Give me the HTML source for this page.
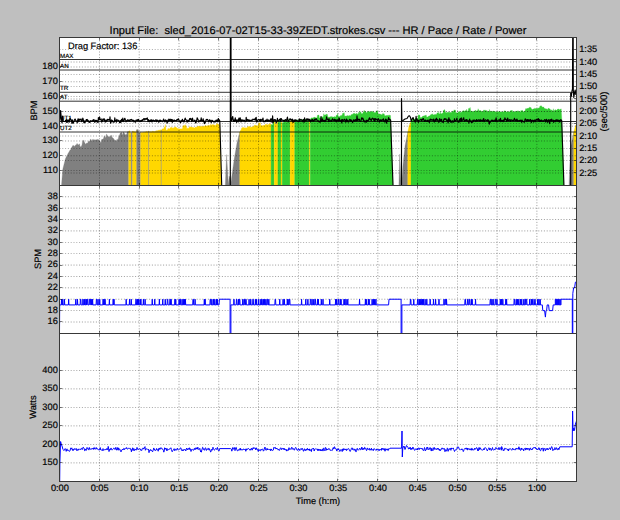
<!DOCTYPE html>
<html><head><meta charset="utf-8"><title>HR / Pace / Rate / Power</title>
<style>html,body{margin:0;padding:0;background:#bfbfbf;}svg{display:block}</style></head>
<body><svg width="620" height="520" viewBox="0 0 620 520">
<defs>
<clipPath id="c1"><rect x="59.5" y="37.5" width="517" height="148"/></clipPath>
<clipPath id="c2"><rect x="59.5" y="185.5" width="517" height="148"/></clipPath>
<clipPath id="c3"><rect x="59.5" y="333.5" width="517" height="148"/></clipPath>
<style>text{text-rendering:geometricPrecision;stroke:#000;stroke-width:0.18px}.g{stroke:#000;stroke-width:0.55;stroke-dasharray:1 1.8;opacity:.72}.t{stroke:#000;stroke-width:1;opacity:.5}</style>
</defs>
<rect width="620" height="520" fill="#bfbfbf"/>
<rect x="59.5" y="37.5" width="517" height="148" fill="#fff"/>
<rect x="59.5" y="185.5" width="517" height="148" fill="#fff"/>
<rect x="59.5" y="333.5" width="517" height="148" fill="#fff"/>
<g clip-path="url(#c1)">
<path d="M61.6,185.5 L61.6,183.9 L62,179 L62.4,174.1 L62.8,169.2 L63.2,167.6 L63.6,166 L64,164.4 L64.4,162.8 L64.8,161.2 L65.2,159.6 L65.4,158.8 L65.6,158.4 L66,157.6 L66.4,156.8 L66.8,156 L67.2,155.2 L67.6,154.4 L68,153.6 L68,153.6 L68.4,152.94 L68.8,152.28 L69.2,151.62 L69.6,150.95 L70,150.06 L70.4,150.09 L70.6,149.76 L70.8,149.45 L71.2,148.18 L71.6,147.57 L72,146.88 L72.3,146.42 L72.4,146.36 L72.8,145.59 L73.2,145.38 L73.6,145.81 L74,145.59 L74.4,146.57 L74.8,146.35 L74.9,146.3 L75.2,145.41 L75.6,145.05 L76,145.23 L76.4,144.87 L76.8,143.8 L77.1,143.52 L77.2,143.62 L77.6,144.13 L78,144.51 L78.4,144.7 L78.8,145.09 L79.2,143.8 L79.2,143.8 L79.6,144.04 L80,146.56 L80.4,146.8 L80.8,146.73 L81,146.86 L81.2,146.46 L81.6,145.67 L82,144.89 L82.4,142.13 L82.8,141.35 L83.2,140.52 L83.5,139.93 L83.6,140.07 L84,141.42 L84.4,142 L84.8,142.96 L85.2,143.53 L85.3,143.68 L85.6,144.18 L86,143.92 L86.4,143.34 L86.8,143.08 L87.2,143.33 L87.6,143.07 L87.9,142.87 L88,141.72 L88.4,141.32 L88.8,141.78 L89.2,141.38 L89.6,141.05 L90,140.65 L90.4,139.3 L90.5,139.2 L90.8,139.05 L91.2,140.98 L91.6,140.76 L92,139.51 L92.2,139.4 L92.4,139.54 L92.8,140.39 L93.2,140.67 L93.6,139.31 L94,139.59 L94.4,139.76 L94.8,140.03 L94.8,140.03 L95.2,140.11 L95.6,139.84 L96,139.77 L96.4,139.5 L96.8,139.88 L97.2,139.61 L97.4,139.47 L97.6,139.34 L98,139.76 L98.4,139.56 L98.8,139.98 L99.1,140.3 L99.2,139.98 L99.6,140.55 L100,141.51 L100.3,141.93 L100.4,141.78 L100.8,142.74 L101.2,142.13 L101.6,139.69 L102,139.09 L102.4,139.42 L102.6,139.12 L102.8,138.95 L103.2,138.78 L103.6,138.44 L104,136.37 L104.4,136.04 L104.8,137.08 L105.2,136.74 L105.2,136.74 L105.6,137.71 L106,137.55 L106.4,134.39 L106.8,134.23 L106.9,134.19 L107.2,135.92 L107.6,136.2 L108,136.68 L108.4,136.96 L108.6,137.1 L108.8,136.36 L109.2,136.16 L109.6,137.15 L110,136.95 L110.4,136.24 L110.4,136.24 L110.8,136.38 L111.2,135.26 L111.6,135.4 L112,137.6 L112.4,137.74 L112.8,137.73 L113,137.8 L113.2,138 L113.6,138.65 L114,139.05 L114.4,139.9 L114.7,140.2 L114.8,140.35 L115.2,139.99 L115.6,140.6 L116,141 L116.4,141.61 L116.4,141.61 L116.8,139.72 L117.2,139.11 L117.6,140.22 L118,139.61 L118.1,139.45 L118.4,137.63 L118.8,136.68 L119.2,135.86 L119.6,134.91 L119.9,134.19 L120,133.38 L120.4,133.05 L120.8,132.99 L121.2,132.66 L121.6,132.33 L121.6,132.72 L122,132.89 L122.4,134.7 L122.8,134.87 L123.2,132.05 L123.6,132.22 L124,132.9 L124.2,132.99 L124.4,132.92 L124.8,134.3 L125.2,134.16 L125.6,135.1 L125.9,135 L126,134.98 L126.4,134.14 L126.8,134.07 L127.2,131.77 L127.6,131.71 L127.7,131.69 L128,133.26 L128.4,131.51 L128.7,131.39 L128.7,185.5 Z" fill="#808080" stroke="#808080" stroke-width="0.3"/>
<path d="M128.7,185.5 L128.7,131.39 L129,130.95 L129.1,130.94 L129.5,130.84 L129.9,130.84 L130.3,133 L130.7,133.21 L131.1,132.63 L131.2,132.62 L131.2,185.5 Z" fill="#ffd700" stroke="#ffd700" stroke-width="0.3"/>
<path d="M131.2,185.5 L131.2,132.62 L131.6,132.99 L132,132.99 L132.4,131.27 L132.5,131.26 L132.5,185.5 Z" fill="#808080" stroke="#808080" stroke-width="0.3"/>
<path d="M132.5,185.5 L132.5,131.26 L132.9,131.25 L133.3,131.47 L133.7,131.29 L134.1,131.25 L134.5,131.82 L134.9,132.08 L135.3,131.79 L135.7,132.12 L136.1,131.61 L136.5,129.87 L136.6,129.86 L136.6,185.5 Z" fill="#ffd700" stroke="#ffd700" stroke-width="0.3"/>
<path d="M136.6,185.5 L136.6,129.86 L137,129.57 L137.4,129.68 L137.8,129.49 L138.2,129.5 L138.6,132.84 L139,132.81 L139.4,133.01 L139.8,132.93 L140,132.11 L140.2,132.08 L140.6,132.5 L140.6,185.5 Z" fill="#808080" stroke="#808080" stroke-width="0.3"/>
<path d="M140.6,185.5 L140.6,132.5 L141,132.49 L141.4,132.46 L141.8,132.42 L142.2,132.56 L142.6,132.52 L143,132.06 L143.4,132.26 L143.8,132.18 L144.2,131.87 L144.6,132.28 L145,132.26 L145.4,131.92 L145.8,131.63 L146.2,131.59 L146.6,131.43 L147,131.47 L147.4,131.66 L147.8,131.87 L148.2,131.19 L148.6,131.19 L148.6,185.5 Z" fill="#ffd700" stroke="#ffd700" stroke-width="0.3"/>
<path d="M148.6,185.5 L148.6,131.19 L149,131.45 L149.2,131.73 L149.2,185.5 Z" fill="#808080" stroke="#808080" stroke-width="0.3"/>
<path d="M149.2,185.5 L149.2,131.73 L149.6,131.92 L150,131.59 L150.4,131.63 L150.8,131.52 L151.2,131.78 L151.6,131.74 L152,131.28 L152.4,131.04 L152.8,131.45 L153.2,131.35 L153.6,131.6 L154,131.16 L154.4,131.67 L154.8,131.5 L155.2,131.46 L155.6,130.87 L156,131.01 L156.4,131.15 L156.8,130.27 L157.2,131.24 L157.6,130.38 L158,130.24 L158.4,130.28 L158.8,130.23 L159.2,130.11 L159.6,130.14 L160,130.29 L160.4,130.25 L160.8,129.6 L161.1,130.04 L161.1,185.5 Z" fill="#ffd700" stroke="#ffd700" stroke-width="0.3"/>
<path d="M161.1,185.5 L161.1,130.04 L161.5,130 L161.7,130.15 L161.7,185.5 Z" fill="#808080" stroke="#808080" stroke-width="0.3"/>
<path d="M161.7,185.5 L161.7,130.15 L162.1,128.88 L162.5,129.01 L162.9,128.73 L163.3,128.68 L163.7,129.24 L164.1,127.17 L164.5,127.19 L164.9,126.78 L165.3,124.39 L165.7,126.79 L166.1,130.55 L166.5,130.07 L166.9,130.03 L167.3,129.93 L167.7,129.62 L168,128.27 L168.1,128.26 L168.5,128.71 L168.9,128.66 L169.3,128.68 L169.7,129.1 L170.1,127.75 L170.5,127.72 L170.9,127.3 L171.3,127.56 L171.7,127.27 L172.1,127.46 L172.5,128.56 L172.9,127.82 L173.3,127.82 L173.7,128.13 L174.1,128.1 L174.5,127.09 L174.9,126.89 L175.3,126.92 L175.7,127 L176.1,127.13 L176.5,127.97 L176.9,127.63 L177.3,128.42 L177.7,128.39 L178.1,128.03 L178.5,129.1 L178.9,129.15 L179.3,129.05 L179.7,128.82 L180.1,128.63 L180.5,128.96 L180.9,128.78 L181.3,128.75 L181.7,128.91 L182.1,128.85 L182.5,128.68 L182.9,125.7 L183.3,125.54 L183.7,125.66 L184.1,125.46 L184.5,125.36 L184.9,125.93 L185.3,124.56 L185.7,125.86 L186.1,126.38 L186.5,126.17 L186.9,129.1 L187.3,128.33 L187.7,128.19 L188.1,128.16 L188.5,128.13 L188.9,128.35 L189.3,126.89 L189.7,126.74 L190.1,126.84 L190.5,126.79 L190.9,127.27 L191.3,127.36 L191.7,127.05 L192.1,127.02 L192.5,127.42 L192.9,127.24 L193.3,127.35 L193.7,127.68 L194.1,127.84 L194.5,127.95 L194.9,127.73 L195.3,126.98 L195.7,126.95 L196.1,127.41 L196.5,127.07 L196.9,127.35 L197,127.35 L197.3,127.09 L197.7,126 L198.1,126.05 L198.5,126.22 L198.9,126.2 L199.3,126.15 L199.7,126.35 L200.1,126.39 L200.5,126.38 L200.9,126.45 L201.3,126.09 L201.7,126.29 L202.1,126.61 L202.5,126.48 L202.9,126.44 L203.3,126.19 L203.7,126.08 L204.1,126.16 L204.5,126.25 L204.9,125.8 L205.3,125.32 L205.7,125.57 L206.1,126.03 L206.5,125.98 L206.9,125.75 L207.3,125.69 L207.7,125.64 L208.1,125.64 L208.5,125.18 L208.9,125.33 L209.3,125.55 L209.7,125.56 L210.1,125.51 L210.5,125.21 L210.9,123.95 L211.3,125.29 L211.7,125.26 L212.1,125 L212.5,124.8 L212.9,124.37 L213.3,124.85 L213.7,124.8 L214.1,124.69 L214.5,125.35 L214.9,125.27 L215.3,125.63 L215.7,125.12 L216.1,125.1 L216.5,123.87 L216.9,123.74 L217.3,123.69 L217.7,123.67 L218.1,123.94 L218.5,125.07 L218.9,124.93 L219,124.4 L219.3,124.4 L219.7,124.4 L219.7,124.4 L220.1,137.14 L220.5,149.87 L220.9,162.61 L221.3,175.35 L221.6,184.9 L221.6,185.5 Z" fill="#ffd700" stroke="#ffd700" stroke-width="0.3"/>
<path d="M225.3,185.5 L225.3,184.9 L225.7,175.55 L226.1,166.19 L226.5,156.84 L226.6,154.5 L226.9,159.57 L227.3,166.32 L227.7,173.08 L228.1,179.83 L228.4,184.9 L228.5,183.79 L228.9,179.34 L229.2,176 L229.3,176.23 L229.7,177.15 L230.1,178.08 L230.5,179 L230.5,179 L230.6,184.9 L230.9,182.78 L231.3,179.95 L231.7,177.12 L232,175 L232.1,174.29 L232.5,171.46 L232.9,168.62 L233.3,165.79 L233.7,162.96 L234.1,160.12 L234.4,158 L234.5,157.42 L234.9,155.12 L235.3,152.81 L235.7,150.5 L236.1,148.19 L236.5,145.88 L236.9,143.58 L237,143 L237.3,141.82 L237.7,140.25 L238.1,138.68 L238.5,137.11 L238.9,135.54 L239.3,133.96 L239.7,132.39 L239.8,132 L239.8,185.5 Z" fill="#808080" stroke="#808080" stroke-width="0.3"/>
<path d="M239.8,185.5 L239.8,132 L240.2,131.18 L240.6,130.36 L241,130.23 L241.4,128.54 L241.8,127.95 L242,127.54 L242.2,127.45 L242.6,127.68 L243,127.3 L243.4,127.24 L243.8,128.03 L244.2,127.92 L244.6,127.59 L245,128.01 L245.4,127.87 L245.8,127.68 L246.2,127.8 L246.6,127.92 L247,127.86 L247.4,127.25 L247.8,126.37 L248.2,126.99 L248.6,126.51 L249,126.8 L249.4,126.21 L249.8,126.16 L250,127.03 L250.2,127.36 L250.6,127.31 L251,127.46 L251.4,126.86 L251.8,127.35 L252.2,126.58 L252.6,126.38 L253,126.67 L253.4,126.83 L253.8,126.14 L254.2,125.4 L254.6,125.11 L255,125.33 L255.4,125.01 L255.8,125.49 L256.2,125.89 L256.6,125.41 L257,125.49 L257.4,125.67 L257.8,125.63 L258.2,125.24 L258.6,123.06 L259,122.98 L259.4,122.99 L259.8,122.65 L260,122.62 L260.2,122.79 L260.6,125.46 L261,125.43 L261.4,125.81 L261.8,125.43 L262.2,125.52 L262.6,125.98 L263,125.36 L263.4,125.35 L263.8,125.52 L264.2,125.41 L264.6,125.37 L265,125.09 L265.4,124.53 L265.8,123.9 L266.2,124.07 L266.6,124.54 L267,124.75 L267.4,124.72 L267.8,124.78 L268.2,124.74 L268.6,124.36 L269,124.49 L269.4,123.52 L269.8,124.18 L270.2,124.22 L270.6,123.87 L271,124.44 L271,124.44 L271.1,124.42 L271.1,185.5 Z" fill="#ffd700" stroke="#ffd700" stroke-width="0.3"/>
<path d="M271.1,185.5 L271.1,124.42 L271.5,124.7 L271.9,124.6 L272.3,124.91 L272.7,124.83 L273.1,121.45 L273.5,121.02 L273.9,120.9 L274.2,120.8 L274.2,185.5 Z" fill="#32cd32" stroke="#32cd32" stroke-width="0.3"/>
<path d="M274.2,185.5 L274.2,120.8 L274.6,120.99 L275,120.93 L275.4,123.84 L275.8,123.77 L276.2,123.51 L276.6,124.05 L277,123.48 L277.4,120.43 L277.8,120.66 L277.9,120.63 L277.9,185.5 Z" fill="#ffd700" stroke="#ffd700" stroke-width="0.3"/>
<path d="M277.9,185.5 L277.9,120.63 L278.3,120.3 L278.7,120.16 L279.1,120.46 L279.5,122.27 L279.9,122.19 L280,121.92 L280.3,121.89 L280.7,122.42 L281,122.18 L281,185.5 Z" fill="#32cd32" stroke="#32cd32" stroke-width="0.3"/>
<path d="M281,185.5 L281,122.18 L281.4,121.95 L281.8,122.77 L282.2,122.79 L282.2,122.79 L282.2,185.5 Z" fill="#ffd700" stroke="#ffd700" stroke-width="0.3"/>
<path d="M282.2,185.5 L282.2,122.79 L282.6,122.73 L283,123.02 L283.4,122.39 L283.8,120 L284.2,120.26 L284.6,120.01 L285,120.17 L285.4,119.84 L285.8,121.52 L286.2,121.46 L286.6,122.16 L287,122.36 L287.4,121.72 L287.8,120.97 L288.2,120.86 L288.6,120.71 L289,118.77 L289.4,120.99 L289.8,120.94 L290.1,120.8 L290.1,185.5 Z" fill="#32cd32" stroke="#32cd32" stroke-width="0.3"/>
<path d="M290.1,185.5 L290.1,120.8 L290.5,120.68 L290.9,120.79 L291.3,120.44 L291.7,120.49 L292.1,121.39 L292.5,121.34 L292.9,121.42 L293.3,120.76 L293.7,121.34 L294.1,120 L294.5,120.49 L294.7,120.46 L294.7,185.5 Z" fill="#ffd700" stroke="#ffd700" stroke-width="0.3"/>
<path d="M294.7,185.5 L294.7,120.46 L295.1,120.62 L295.5,120.39 L295.9,120.28 L296.3,120.33 L296.7,120.3 L297.1,120.27 L297.5,119.79 L297.9,119.74 L298.3,120.14 L298.7,120.47 L299.1,120.21 L299.5,120.82 L299.9,120.14 L300.3,120.9 L300.7,119.8 L301.1,119.54 L301.5,119.49 L301.9,119.47 L302,119.62 L302.3,119.59 L302.7,119.63 L303.1,119.74 L303.5,119.66 L303.9,120.11 L304.3,119.49 L304.7,119.18 L305.1,119.13 L305.5,119.28 L305.9,119.04 L306.3,119.06 L306.7,119.59 L307.1,119.07 L307.5,119.62 L307.9,119.29 L308.3,119.41 L308.7,119.37 L309.1,119.17 L309.3,119.21 L309.3,185.5 Z" fill="#32cd32" stroke="#32cd32" stroke-width="0.3"/>
<path d="M309.3,185.5 L309.3,119.21 L309.7,119.81 L310.1,119.23 L310.2,119.22 L310.2,185.5 Z" fill="#ffd700" stroke="#ffd700" stroke-width="0.3"/>
<path d="M310.2,185.5 L310.2,119.22 L310.6,119.36 L311,118 L311.4,117.95 L311.8,117.72 L312.2,118.51 L312.6,117.83 L313,117.63 L313.4,117.66 L313.8,117.57 L314.2,117.58 L314.6,117.1 L315,117.06 L315.4,117.7 L315.8,117.63 L316.2,117.68 L316.6,117.94 L317,117.92 L317.4,115.74 L317.8,115.07 L318.2,115.02 L318.6,114.98 L319,115.43 L319.4,118.04 L319.8,118.06 L320.2,117.71 L320.6,117.89 L321,117.87 L321.4,116.47 L321.8,117.07 L322.2,117.02 L322.6,116.72 L323,116.97 L323.4,116.55 L323.8,113.64 L324.2,115.05 L324.6,115.28 L325,114.9 L325.4,115.11 L325.8,114.47 L326.2,114.44 L326.6,114.1 L327,114.51 L327.4,114.38 L327.8,117.23 L328.2,117.21 L328.6,117.13 L329,116.94 L329,116.94 L329.4,116.92 L329.8,117.17 L330.2,116.75 L330.6,116.78 L331,116.78 L331.4,116.46 L331.8,116.68 L332.2,116.66 L332.6,116.93 L333,116.9 L333.4,117.08 L333.8,116.94 L334.2,117.01 L334.6,116.46 L335,116.67 L335.4,117.05 L335.8,117.01 L336.2,115.33 L336.6,115.3 L337,115.23 L337.4,115.18 L337.8,113.37 L338.2,116.57 L338.6,116.93 L339,116.6 L339.4,116.71 L339.8,116.33 L340.2,116.31 L340.6,115.53 L341,115.58 L341.4,115.47 L341.8,115.39 L342.2,115.28 L342.6,113.39 L343,113.19 L343.4,113.16 L343.8,113.13 L344.2,112.7 L344.6,116.03 L345,116.55 L345.4,116.05 L345.8,115.89 L346.2,116.03 L346.6,116.23 L347,115.42 L347.4,115.4 L347.8,115.93 L348.2,115.69 L348.6,115.88 L349,115.53 L349.4,115.48 L349.8,115.66 L350,115.65 L350.2,115.38 L350.6,115.92 L351,115.17 L351.4,114.2 L351.8,114.73 L352.2,114.51 L352.6,114.18 L353,113.85 L353.4,113.25 L353.8,113.79 L354.2,113.4 L354.6,113.35 L355,113.81 L355.4,114.33 L355.8,113.67 L356.2,113.68 L356.6,113.25 L357,113.43 L357.4,113.97 L357.8,114.15 L358.2,114.09 L358.6,112.14 L359,113.82 L359.4,112.36 L359.8,111.87 L360.2,111.87 L360.6,112.29 L361,112.28 L361.4,113.71 L361.8,113.66 L362,113.55 L362.2,113.52 L362.6,113.64 L363,112.72 L363.4,111.78 L363.8,111.8 L364.2,110.16 L364.6,111.84 L365,111.61 L365.4,111.54 L365.8,111.33 L366.2,112.86 L366.6,112.81 L367,112.32 L367.4,112.18 L367.8,111.31 L368.2,111.23 L368.6,111.49 L369,111.42 L369.4,111.53 L369.8,112.1 L370.2,111.77 L370.6,111.98 L371,111.97 L371,111.97 L371.4,111.83 L371.8,111.03 L372.2,111.41 L372.6,111.5 L373,111.41 L373.4,111.69 L373.8,112.49 L374.2,112.52 L374.6,112.44 L375,112.9 L375.4,112.46 L375.8,112.61 L376.2,110.6 L376.6,110.94 L377,111.35 L377.4,110.91 L377.8,111.03 L378,113.69 L378.2,113.75 L378.6,114.19 L379,113.68 L379.4,113.94 L379.8,114.05 L380.2,114.04 L380.6,114.42 L381,114.22 L381.4,114.8 L381.8,114.64 L382.2,114.64 L382.6,113.46 L383,113.96 L383.4,114.07 L383.5,113.71 L383.8,113.73 L384.2,113.86 L384.6,115.38 L385,115.86 L385.4,115.88 L385.8,115.55 L386.2,115.54 L386.6,115.52 L387,115.55 L387.4,115.61 L387.8,115.21 L388.2,115.5 L388.6,115.31 L389,115.16 L389.4,114.93 L389.8,115.44 L390.2,115.48 L390.5,115.5 L390.6,118.28 L391,129.38 L391.4,140.48 L391.8,151.59 L392.2,162.69 L392.6,173.8 L393,184.9 L393,184.9 L393,185.5 Z" fill="#32cd32" stroke="#32cd32" stroke-width="0.3"/>
<path d="M398.9,185.5 L398.9,184.9 L399.3,169.45 L399.7,154 L399.7,154 L400.1,162.24 L400.5,170.48 L400.9,178.72 L401.2,184.9 L401.3,184.9 L401.5,184.9 L401.7,182.25 L402.1,176.94 L402.5,171.63 L402.9,166.33 L403,165 L403.3,162.15 L403.7,158.35 L404.1,154.55 L404.5,150.75 L404.9,146.95 L405,146 L405.3,144.5 L405.7,142.5 L406.1,140.5 L406.5,138.5 L406.9,136.5 L407.3,134.5 L407.7,132.5 L407.8,132 L407.8,185.5 Z" fill="#808080" stroke="#808080" stroke-width="0.3"/>
<path d="M407.8,185.5 L407.8,132 L408.2,130 L408.6,128 L409,126 L409,126 L409.4,125.1 L409.8,124.2 L410.2,123.3 L410.6,122.4 L411,121.5 L411,121.5 L411,185.5 Z" fill="#ffd700" stroke="#ffd700" stroke-width="0.3"/>
<path d="M411,185.5 L411,121.5 L411.4,121.15 L411.8,120.8 L412.2,118.95 L412.6,118.36 L413,118.26 L413.4,117.7 L413.8,118.41 L414.2,119.46 L414.6,119.25 L415,118.82 L415,118.82 L415.4,118.68 L415.8,118.62 L416.2,118.28 L416.6,118.76 L417,118.43 L417.4,118.63 L417.8,118.86 L418.2,115.15 L418.6,114.77 L419,115.18 L419.4,115.12 L419.8,115.02 L420.2,117.87 L420.6,117.63 L421,117.26 L421.4,117.78 L421.8,117.32 L422.2,116.5 L422.6,116.43 L423,116.37 L423.4,116.12 L423.8,115.88 L424.2,116.25 L424.6,115.49 L425,115.54 L425,115.54 L425.4,115.4 L425.8,115.31 L426.2,115.09 L426.6,117.1 L427,117.13 L427.4,116.94 L427.8,116.9 L428.2,116.76 L428.6,116.04 L429,115.94 L429.4,115.98 L429.8,115.7 L430.2,115.6 L430.6,114.75 L431,114.41 L431.4,114.3 L431.8,114.54 L432.2,114.26 L432.6,113.75 L433,115.01 L433.4,114.92 L433.8,114.82 L434.2,114.71 L434.6,114.54 L435,114.53 L435.4,114.45 L435.8,114.24 L436.2,114.58 L436.6,114.62 L437,112.99 L437.4,112.9 L437.8,112.8 L438.2,112.71 L438.6,112.35 L439,114.29 L439,114.29 L439.4,113.83 L439.8,114.11 L440.2,111.13 L440.6,113.78 L441,113.75 L441.4,113.65 L441.8,113.8 L442.2,113.07 L442.6,113.35 L443,113.45 L443.4,110.53 L443.8,110.2 L444.2,109.67 L444.6,109.64 L445,110.54 L445.4,112.67 L445.8,112.34 L446.2,112.58 L446.6,112.68 L447,112.33 L447.4,112.29 L447.8,112.5 L448.2,112.46 L448.6,111.87 L449,112.51 L449.4,112.17 L449.8,112.5 L450.2,112.01 L450.6,112.41 L451,112.92 L451.4,112.44 L451.8,111.81 L452.2,111.17 L452.6,111.3 L453,111.18 L453.4,111.55 L453.8,110.66 L454.2,109.79 L454.6,110.26 L455,110.05 L455.4,110.02 L455.8,112.63 L456.2,112.66 L456.6,112.55 L457,113.16 L457.4,112.86 L457.8,112.96 L458.2,112.1 L458.6,111.73 L459,111.69 L459.4,111.73 L459.8,111.18 L460.2,111.95 L460.6,112.46 L461,112.56 L461.4,112.35 L461.8,111.84 L462.2,111.24 L462.6,111.21 L463,110.6 L463.4,110.63 L463.8,110.92 L464.2,111.16 L464.6,111.12 L465,110.64 L465.4,110.78 L465.8,110.85 L466.2,110.82 L466.6,109.24 L467,110.94 L467.4,111.29 L467.8,111.01 L468.2,111.35 L468.6,108.31 L469,108.78 L469.4,108.4 L469.8,108.37 L470.2,107.49 L470.6,110.85 L471,111.4 L471.4,111.16 L471.8,111.13 L472.2,110.96 L472.6,111.38 L473,111.2 L473,111.2 L473.4,111.2 L473.8,111.47 L474.2,111.14 L474.6,111.55 L475,110.23 L475.4,110.48 L475.8,110.48 L476.2,110.72 L476.6,111.07 L477,111.08 L477.4,110.8 L477.8,110.29 L478.2,108.75 L478.6,110.51 L479,110.43 L479.4,110.98 L479.8,110.52 L480.2,110.6 L480.6,110.6 L481,111.1 L481.4,111.19 L481.8,111.17 L482.2,111.61 L482.6,111.25 L483,111.95 L483.4,110.2 L483.8,110.15 L484.2,110.16 L484.6,110.38 L485,109.85 L485.4,110.93 L485.8,110.33 L486.2,110.73 L486.6,110.72 L487,110.57 L487.4,111.22 L487.8,111.23 L488.2,111.4 L488.6,111.63 L489,111.8 L489.4,109.46 L489.8,111.06 L490.2,111.37 L490.6,111.12 L491,111.22 L491.4,111.22 L491.8,111.4 L492.2,111.49 L492.6,111.22 L493,111.08 L493.4,111 L493.8,111.25 L494.2,111.05 L494.6,111.61 L495,111.61 L495.4,111.55 L495.8,112.03 L496.2,111.95 L496.6,112.03 L497,111.63 L497.4,111.62 L497.8,111.25 L498.2,111.83 L498.6,111.84 L499,111.8 L499.4,110.96 L499.8,111.46 L500,111.8 L500.2,111.8 L500.6,112.07 L501,112 L501.4,111.57 L501.8,112.03 L502.2,112.02 L502.6,111.89 L503,112.06 L503.4,111.71 L503.8,112.23 L504.2,110.69 L504.6,110.95 L505,111.1 L505.4,111 L505.8,110.99 L506.2,111.65 L506.6,112.29 L507,111.77 L507.4,111.53 L507.8,111.84 L508.2,111.51 L508.6,111.93 L509,111.86 L509.4,111.86 L509.8,111.71 L510.2,111.59 L510.6,110.59 L511,110.76 L511.4,110.2 L511.8,111.02 L512.2,110.28 L512.6,111.85 L513,111.84 L513.4,111.95 L513.8,111.7 L514.2,112.1 L514.6,111.29 L515,111.84 L515.4,111.08 L515.8,111.47 L516.2,111.46 L516.6,111.46 L517,110.9 L517.4,111.36 L517.8,110.82 L518.2,110.82 L518.6,111.28 L519,112.01 L519.4,111.15 L519.8,111.78 L520.2,111.78 L520.6,111.88 L521,110.26 L521.4,110.81 L521.8,110.91 L522.2,110.21 L522.6,110.48 L523,111.4 L523.4,111.86 L523.8,111.86 L524,111.4 L524.2,111.18 L524.6,111.19 L525,110.95 L525.4,109.82 L525.8,108.61 L526,108.39 L526.2,109.15 L526.6,108.7 L527,108.57 L527.4,108.57 L527.8,108.18 L528.2,108.62 L528.6,108.01 L529,108.25 L529.4,107.17 L529.8,107.21 L530.2,107.55 L530.6,107.6 L531,107.6 L531.4,108.68 L531.8,109.22 L532.2,109.26 L532.6,109.66 L533,109 L533.4,109.09 L533.8,108.64 L534.2,108.38 L534.6,108.38 L535,108.67 L535.4,108.5 L535.8,108.5 L536.2,108.1 L536.6,108.76 L537,108.44 L537.4,108.69 L537.8,107.92 L538.2,107.92 L538.6,108.13 L539,108.1 L539.4,107.93 L539.8,106.49 L540.2,106.05 L540.6,106.22 L541,105.54 L541.4,106.21 L541.8,106.21 L542.2,106.98 L542.6,107.18 L543,106.94 L543.4,107.25 L543.8,106.85 L544.2,108.75 L544.6,108.02 L545,108.85 L545.4,108.85 L545.8,108.66 L546.2,108.82 L546.6,108.98 L547,109.25 L547,109.25 L547.4,109.1 L547.8,110.18 L548.2,108 L548.6,108.29 L549,108.85 L549,108.92 L549.4,108.89 L549.8,108.62 L550.2,109.15 L550.6,110.04 L551,110.44 L551.4,109.71 L551.8,110.27 L552.2,110.02 L552.6,111.2 L553,111.49 L553.4,108.72 L553.8,111.37 L554.2,111.31 L554.6,109.98 L555,110.08 L555.4,109.59 L555.8,110.13 L556,110.12 L556.2,109.9 L556.6,110.59 L557,109.85 L557.4,109.45 L557.8,109.07 L558,108.91 L558.2,108.91 L558.6,108.91 L559,109.52 L559.4,109.69 L559.8,109.69 L560.2,109.2 L560.6,109.28 L561,109.28 L561.2,108.8 L561.4,112.53 L561.8,120 L561.8,120 L562.2,131.8 L562.6,143.6 L563,155.4 L563.4,167.2 L563.8,179 L564,184.9 L564,185.5 Z" fill="#32cd32" stroke="#32cd32" stroke-width="0.3"/>
<path d="M569,185.5 L569,184.9 L569.4,174.95 L569.8,165 L570.2,157 L570.6,149 L570.7,147 L571,145.5 L571.4,143.5 L571.8,141.5 L572.2,139.5 L572.5,138 L572.6,137.54 L573,135.69 L573.4,133.85 L573.8,132 L573.8,132 L573.8,185.5 Z" fill="#808080" stroke="#808080" stroke-width="0.3"/>
<path d="M573.8,185.5 L573.8,132 L574.2,130.47 L574.6,128.94 L575,127.41 L575.4,125.88 L575.5,125.5 L575.8,125.2 L576.2,124.8 L576.5,124.5 L576.5,185.5 Z" fill="#ffd700" stroke="#ffd700" stroke-width="0.3"/>
</g>
<line x1="99.47" x2="99.47" y1="37.5" y2="185.5" class="g"/>
<line x1="139.23" x2="139.23" y1="37.5" y2="185.5" class="g"/>
<line x1="179" x2="179" y1="37.5" y2="185.5" class="g"/>
<line x1="218.76" x2="218.76" y1="37.5" y2="185.5" class="g"/>
<line x1="258.52" x2="258.52" y1="37.5" y2="185.5" class="g"/>
<line x1="298.29" x2="298.29" y1="37.5" y2="185.5" class="g"/>
<line x1="338.06" x2="338.06" y1="37.5" y2="185.5" class="g"/>
<line x1="377.82" x2="377.82" y1="37.5" y2="185.5" class="g"/>
<line x1="417.58" x2="417.58" y1="37.5" y2="185.5" class="g"/>
<line x1="457.35" x2="457.35" y1="37.5" y2="185.5" class="g"/>
<line x1="497.12" x2="497.12" y1="37.5" y2="185.5" class="g"/>
<line x1="536.88" x2="536.88" y1="37.5" y2="185.5" class="g"/>
<line x1="99.47" x2="99.47" y1="185.5" y2="333.5" class="g"/>
<line x1="139.23" x2="139.23" y1="185.5" y2="333.5" class="g"/>
<line x1="179" x2="179" y1="185.5" y2="333.5" class="g"/>
<line x1="218.76" x2="218.76" y1="185.5" y2="333.5" class="g"/>
<line x1="258.52" x2="258.52" y1="185.5" y2="333.5" class="g"/>
<line x1="298.29" x2="298.29" y1="185.5" y2="333.5" class="g"/>
<line x1="338.06" x2="338.06" y1="185.5" y2="333.5" class="g"/>
<line x1="377.82" x2="377.82" y1="185.5" y2="333.5" class="g"/>
<line x1="417.58" x2="417.58" y1="185.5" y2="333.5" class="g"/>
<line x1="457.35" x2="457.35" y1="185.5" y2="333.5" class="g"/>
<line x1="497.12" x2="497.12" y1="185.5" y2="333.5" class="g"/>
<line x1="536.88" x2="536.88" y1="185.5" y2="333.5" class="g"/>
<line x1="99.47" x2="99.47" y1="333.5" y2="481.5" class="g"/>
<line x1="139.23" x2="139.23" y1="333.5" y2="481.5" class="g"/>
<line x1="179" x2="179" y1="333.5" y2="481.5" class="g"/>
<line x1="218.76" x2="218.76" y1="333.5" y2="481.5" class="g"/>
<line x1="258.52" x2="258.52" y1="333.5" y2="481.5" class="g"/>
<line x1="298.29" x2="298.29" y1="333.5" y2="481.5" class="g"/>
<line x1="338.06" x2="338.06" y1="333.5" y2="481.5" class="g"/>
<line x1="377.82" x2="377.82" y1="333.5" y2="481.5" class="g"/>
<line x1="417.58" x2="417.58" y1="333.5" y2="481.5" class="g"/>
<line x1="457.35" x2="457.35" y1="333.5" y2="481.5" class="g"/>
<line x1="497.12" x2="497.12" y1="333.5" y2="481.5" class="g"/>
<line x1="536.88" x2="536.88" y1="333.5" y2="481.5" class="g"/>
<line x1="59.5" x2="576.5" y1="170.58" y2="170.58" class="g"/>
<line x1="59.5" x2="576.5" y1="155.78" y2="155.78" class="g"/>
<line x1="59.5" x2="576.5" y1="140.98" y2="140.98" class="g"/>
<line x1="59.5" x2="576.5" y1="126.18" y2="126.18" class="g"/>
<line x1="59.5" x2="576.5" y1="111.38" y2="111.38" class="g"/>
<line x1="59.5" x2="576.5" y1="96.58" y2="96.58" class="g"/>
<line x1="59.5" x2="576.5" y1="81.78" y2="81.78" class="g"/>
<line x1="59.5" x2="576.5" y1="66.98" y2="66.98" class="g"/>
<line x1="59.5" x2="576.5" y1="49.66" y2="49.66" class="g"/>
<line x1="59.5" x2="576.5" y1="62" y2="62" class="g"/>
<line x1="59.5" x2="576.5" y1="74.33" y2="74.33" class="g"/>
<line x1="59.5" x2="576.5" y1="86.66" y2="86.66" class="g"/>
<line x1="59.5" x2="576.5" y1="99" y2="99" class="g"/>
<line x1="59.5" x2="576.5" y1="111.33" y2="111.33" class="g"/>
<line x1="59.5" x2="576.5" y1="123.66" y2="123.66" class="g"/>
<line x1="59.5" x2="576.5" y1="136" y2="136" class="g"/>
<line x1="59.5" x2="576.5" y1="148.33" y2="148.33" class="g"/>
<line x1="59.5" x2="576.5" y1="160.66" y2="160.66" class="g"/>
<line x1="59.5" x2="576.5" y1="173" y2="173" class="g"/>
<line x1="59.5" x2="576.5" y1="322" y2="322" class="g"/>
<line x1="59.5" x2="576.5" y1="310.61" y2="310.61" class="g"/>
<line x1="59.5" x2="576.5" y1="299.23" y2="299.23" class="g"/>
<line x1="59.5" x2="576.5" y1="287.84" y2="287.84" class="g"/>
<line x1="59.5" x2="576.5" y1="276.46" y2="276.46" class="g"/>
<line x1="59.5" x2="576.5" y1="265.07" y2="265.07" class="g"/>
<line x1="59.5" x2="576.5" y1="253.69" y2="253.69" class="g"/>
<line x1="59.5" x2="576.5" y1="242.3" y2="242.3" class="g"/>
<line x1="59.5" x2="576.5" y1="230.92" y2="230.92" class="g"/>
<line x1="59.5" x2="576.5" y1="219.53" y2="219.53" class="g"/>
<line x1="59.5" x2="576.5" y1="208.15" y2="208.15" class="g"/>
<line x1="59.5" x2="576.5" y1="196.76" y2="196.76" class="g"/>
<line x1="59.5" x2="576.5" y1="462.88" y2="462.88" class="g"/>
<line x1="59.5" x2="576.5" y1="444.38" y2="444.38" class="g"/>
<line x1="59.5" x2="576.5" y1="425.88" y2="425.88" class="g"/>
<line x1="59.5" x2="576.5" y1="407.38" y2="407.38" class="g"/>
<line x1="59.5" x2="576.5" y1="388.88" y2="388.88" class="g"/>
<line x1="59.5" x2="576.5" y1="370.38" y2="370.38" class="g"/>
<line x1="59.5" x2="576.5" y1="59.5" y2="59.5" stroke="#000" stroke-width="0.8"/>
<line x1="59.5" x2="576.5" y1="70" y2="70" stroke="#000" stroke-width="0.8"/>
<line x1="59.5" x2="576.5" y1="92.3" y2="92.3" stroke="#000" stroke-width="0.8"/>
<line x1="59.5" x2="576.5" y1="101.2" y2="101.2" stroke="#000" stroke-width="0.8"/>
<line x1="59.5" x2="576.5" y1="121.5" y2="121.5" stroke="#000" stroke-width="0.8"/>
<line x1="59.5" x2="576.5" y1="132" y2="132" stroke="#000" stroke-width="0.8"/>
<g clip-path="url(#c1)">
<polyline points="59.8,122 60.6,110.5 61.4,119 62,123 62.6,116 63.2,121 63.6,121.39 64,121.57 64.4,121.54 64.8,121.51 65.2,121.17 65.6,120.33 66,121.44 66.4,122.34 66.8,119.44 67.2,121.18 67.6,122.28 68,120.43 68.4,120.04 68.8,121.33 69.2,122.27 69.6,120.11 70,118.1 70.4,119.71 70.8,119.19 71.2,120.88 71.6,121.59 72,123.47 72.4,119.93 72.8,120.89 73.2,123.22 73.6,122.03 74,121.84 74.4,119.92 74.8,119.24 75.2,119.02 75.6,120.32 76,120.64 76.4,121.28 76.8,121.34 77.2,122.86 77.6,120.62 78,118.75 78.4,118.95 78.8,121.77 79.2,119.5 79.6,120.19 80,118.94 80.4,119.96 80.8,119.81 81.2,119.06 81.6,121.7 82,120.98 82.4,120.48 82.8,118.16 83.2,119.28 83.6,121.5 84,122.82 84.4,120.91 84.8,122.61 85.2,122.29 85.6,121.19 86,120.12 86.4,119.52 86.8,120.42 87.2,119.41 87.6,121.2 88,120.35 88.4,120.92 88.8,121.93 89.2,122.48 89.6,122.12 90,120.82 90.4,121.99 90.8,120.57 91.2,120.82 91.6,121.36 92,121.43 92.4,121.26 92.8,120.14 93.2,121.36 93.6,119.62 94,119.65 94.4,121.29 94.8,122.34 95.2,121.1 95.6,120.36 96,121.66 96.4,120.37 96.8,121.02 97.2,121.98 97.6,120.69 98,122.59 98.4,117.55 98.8,119.61 99.2,119.91 99.6,117.13 100,118.92 100.4,119.81 100.8,119.53 101.2,118.96 101.6,122.05 102,121.71 102.4,121.41 102.8,119.06 103.2,119.34 103.6,119.05 104,120.7 104.4,118.91 104.8,119.85 105.2,122.17 105.6,120.75 106,121.78 106.4,120 106.8,121.21 107.2,120.11 107.6,119.35 108,120.21 108.4,119.62 108.8,119.41 109.2,120.12 109.6,120.27 110,116.81 110.4,121.82 110.8,123.24 111.2,120.81 111.6,119.95 112,120.19 112.4,121.74 112.8,120.86 113.2,121.55 113.6,122.17 114,121.55 114.4,121.85 114.8,117.83 115.2,120.39 115.6,120.6 116,121.36 116.4,122.25 116.8,119.23 117.2,120.12 117.6,120.35 118,120.56 118.4,120.31 118.8,120.62 119.2,121.16 119.6,122.65 120,121.19 120.4,120.72 120.8,122.61 121.2,120.48 121.6,119.29 122,121.27 122.4,121.11 122.8,117.97 123.2,121.56 123.6,120.28 124,121.17 124.4,119.33 124.8,118.31 125.2,119.14 125.6,119.92 126,121.92 126.4,120.68 126.8,121.05 127.2,121.17 127.6,119.74 128,120.02 128.4,120.01 128.8,120.94 129.2,119.99 129.6,120.06 130,121.36 130.4,119.68 130.8,119.53 131.2,119.75 131.6,119.45 132,120.96 132.4,120.51 132.8,120.2 133.2,120.52 133.6,120.35 134,122.03 134.4,121.1 134.8,120.8 135.2,121.26 135.6,122.24 136,120.12 136.4,120.4 136.8,120.15 137.2,119.77 137.6,120.92 138,119.75 138.4,119.42 138.8,120.71 139.2,121.44 139.6,120.98 140,120.57 140.4,121.55 140.8,120.84 141.2,120.46 141.6,121.3 142,120.35 142.4,119.67 142.8,120.39 143.2,119.99 143.6,118.89 144,118.53 144.4,118.93 144.8,120.2 145.2,118.52 145.6,119.07 146,119.07 146.4,118.52 146.8,119.23 147.2,117.83 147.6,119.22 148,121.75 148.4,119.53 148.8,121.11 149.2,120.94 149.6,121.83 150,120.1 150.4,120.78 150.8,121.35 151.2,119.66 151.6,120.75 152,122 152.4,120.34 152.8,120.57 153.2,120.05 153.6,120.25 154,120.58 154.4,121.33 154.8,120.54 155.2,120.93 155.6,120.25 156,119.5 156.4,121.78 156.8,120.95 157.2,120.52 157.6,120.1 158,120.55 158.4,121.92 158.8,122.26 159.2,120.5 159.6,121.09 160,119.9 160.4,121.52 160.8,120.92 161.2,120.53 161.6,121.02 162,121.25 162.4,121.64 162.8,120.59 163.2,120.49 163.6,119 164,120.34 164.4,120.41 164.8,121.91 165.2,121.11 165.6,119.91 166,120.13 166.4,121.76 166.8,120.67 167.2,123.1 167.6,120.95 168,120.01 168.4,121.68 168.8,119.08 169.2,120.98 169.6,119.33 170,120.66 170.4,119.87 170.8,119.2 171.2,121.56 171.6,119.62 172,119.81 172.4,122.3 172.8,119.74 173.2,120.83 173.6,121.33 174,120.57 174.4,120.07 174.8,120.7 175.2,120.77 175.6,120.63 176,120.54 176.4,120.81 176.8,119.68 177.2,119.38 177.6,120.2 178,119.61 178.4,118.82 178.8,119.86 179.2,121.4 179.6,120.94 180,121.06 180.4,122.76 180.8,120.77 181.2,121.93 181.6,120.62 182,120.02 182.4,119.29 182.8,121.31 183.2,120.46 183.6,121.67 184,121.96 184.4,120.85 184.8,119.21 185.2,118.11 185.6,119.21 186,119.56 186.4,120.61 186.8,121.06 187.2,122.23 187.6,120.65 188,120.12 188.4,120.63 188.8,121.65 189.2,120.67 189.6,118.55 190,119.36 190.4,118.75 190.8,118.32 191.2,119.95 191.6,121.55 192,120.55 192.4,118.19 192.8,119.31 193.2,121.04 193.6,121.22 194,121.02 194.4,120.79 194.8,120.18 195.2,120.62 195.6,123.03 196,122.69 196.4,121 196.8,119.82 197.2,117.72 197.6,119.22 198,119.17 198.4,121.35 198.8,122.03 199.2,121.31 199.6,120.93 200,120.24 200.4,120.49 200.8,121.2 201.2,117.74 201.6,120.31 202,120.5 202.4,121.12 202.8,119.85 203.2,118.83 203.6,121.77 204,120.86 204.4,123.69 204.8,121.85 205.2,122.69 205.6,121.48 206,120.03 206.4,119.44 206.8,119.95 207.2,119.47 207.6,119.42 208,120.21 208.4,121.41 208.8,121.78 209.2,120.77 209.6,119.8 210,120.06 210.4,121.26 210.8,120.78 211.2,122.59 211.6,121.02 212,120.18 212.4,121.39 212.8,120.75 213.2,121.58 213.6,121.97 214,121.47 214.4,121.17 214.8,122.11 215.2,121.96 215.6,121.09 216,120.22 216.4,120.01 216.8,121.21 217.2,121.8 217.6,119.82 218,119.48 218.4,118.58 218.8,121.46 219.2,119.75 219.8,121 221.7,185" fill="none" stroke="#000" stroke-width="1.15" stroke-linejoin="round" />
<polyline points="230.3,185 230.35,37.5 231,37.5 231.05,119 231.6,121 232.2,118 232.75,116.5 233.4,121.5 234,120 234.6,121.5 235.25,117.8 235.8,121 236.2,120.85 236.6,122.35 237,119.51 237.4,121.1 237.8,121.44 238.2,121.77 238.6,119.33 239,117.98 239.4,120.84 239.8,119.86 240.2,117.72 240.6,120.16 241,121.87 241.4,119.84 241.8,121.14 242.2,119.79 242.6,120.19 243,120.46 243.4,120.95 243.8,119.98 244.2,120.24 244.6,120.61 245,121.94 245.4,121.49 245.8,121.35 246.2,117.39 246.6,120.95 247,120.16 247.4,119.69 247.8,119.37 248.2,120.99 248.6,120.82 249,119.87 249.4,121.15 249.8,120.36 250.2,120.35 250.6,120.63 251,120.36 251.4,120.11 251.8,120.62 252.2,120.43 252.6,119.92 253,118.98 253.4,119.66 253.8,119.46 254.2,119.58 254.6,119.73 255,118.59 255.4,120.24 255.8,117.7 256.2,117.41 256.6,122.05 257,121.44 257.4,121.6 257.8,119.96 258.2,119.52 258.6,119.76 259,119.82 259.4,120.31 259.8,119.58 260.2,121.69 260.6,119.55 261,119.24 261.4,119.88 261.8,120.61 262.2,119.87 262.6,119.69 263,117.97 263.4,121.62 263.8,121.18 264.2,121.66 264.6,121.09 265,121.75 265.4,120.21 265.8,120.2 266.2,121.29 266.6,120.62 267,119.02 267.4,120.24 267.8,121.49 268.2,121.11 268.6,119.95 269,120.04 269.4,121.07 269.8,121.25 270.2,121.76 270.6,118.94 271,119.02 271.4,118.92 271.8,121.23 272.2,122.56 272.6,115.94 273,121.07 273.4,122.21 273.8,119.89 274.2,120.18 274.6,119.49 275,120.69 275.4,119.71 275.8,120.67 276.2,122.99 276.6,121.7 277,120.77 277.4,118.22 277.8,121 278.2,120.66 278.6,120.32 279,120.29 279.4,119.5 279.8,119.21 280.2,121.3 280.6,118.53 281,121.39 281.4,118.55 281.8,119.81 282.2,120.02 282.6,120.33 283,120.59 283.4,120.28 283.8,121.13 284.2,120.34 284.6,121.14 285,120.49 285.4,119.6 285.8,119.72 286.2,120.52 286.6,121.03 287,118.57 287.4,117.02 287.8,119.46 288.2,121.86 288.6,120.59 289,120.19 289.4,120.1 289.8,118.9 290.2,119.43 290.6,118.88 291,120.29 291.4,119.44 291.8,120.25 292.2,121.05 292.6,118.99 293,122.36 293.4,121.83 293.8,120.85 294.2,120.11 294.6,121.69 295,119.9 295.4,120.75 295.8,119.73 296.2,120.51 296.6,120.35 297,120.47 297.4,120.9 297.8,121.25 298.2,121.68 298.6,121.5 299,119.51 299.4,118.88 299.8,121.39 300.2,120.3 300.6,119.42 301,119.28 301.4,119.93 301.8,119.95 302.2,121.21 302.6,120.46 303,121.96 303.4,119.39 303.8,120.93 304.2,122.16 304.6,117.8 305,121.03 305.4,120.69 305.8,120.08 306.2,120.88 306.6,119.21 307,118.61 307.4,120.22 307.8,119.01 308.2,119.13 308.6,120.33 309,119.16 309.4,120.77 309.8,119.48 310.2,120.92 310.6,121.93 311,120.44 311.4,120.16 311.8,120.58 312.2,119.27 312.6,119.86 313,121.45 313.4,120.79 313.8,120.95 314.2,119.63 314.6,119.11 315,120.41 315.4,119.58 315.8,118.75 316.2,119.4 316.6,118.98 317,120.47 317.4,120.79 317.8,120.75 318.2,120.66 318.6,121.74 319,121.15 319.4,121.88 319.8,121.19 320.2,122.27 320.6,120.77 321,116.64 321.4,121.18 321.8,121.32 322.2,121.04 322.6,118.92 323,121.17 323.4,120.53 323.8,121.29 324.2,120.38 324.6,120.79 325,121.69 325.4,120.08 325.8,121.03 326.2,120.12 326.6,116.86 327,118.77 327.4,119.15 327.8,119.68 328.2,119.76 328.6,121.61 329,118.5 329.4,120.47 329.8,121.29 330.2,120.91 330.6,120.69 331,120.12 331.4,121.33 331.8,119.99 332.2,119.57 332.6,118.85 333,120.22 333.4,119.83 333.8,120.52 334.2,120.61 334.6,119.18 335,120.73 335.4,120.19 335.8,119.77 336.2,121.91 336.6,121.17 337,119.79 337.4,119.76 337.8,120.88 338.2,120 338.6,121.04 339,117.95 339.4,118.72 339.8,120.84 340.2,121.32 340.6,121.14 341,120.31 341.4,119.88 341.8,123 342.2,119.51 342.6,119.88 343,121.04 343.4,120.87 343.8,120.26 344.2,119.32 344.6,119.37 345,119.8 345.4,122.17 345.8,120.98 346.2,120.36 346.6,119.04 347,121.88 347.4,120.18 347.8,121.17 348.2,121.24 348.6,122.04 349,120.34 349.4,120.15 349.8,119.39 350.2,119.48 350.6,121.22 351,121.32 351.4,120 351.8,120.96 352.2,121.56 352.6,122.6 353,121.64 353.4,119.86 353.8,120.53 354.2,120.03 354.6,121.02 355,121.2 355.4,119.62 355.8,120.09 356.2,120.39 356.6,120.8 357,115.83 357.4,119.81 357.8,120.49 358.2,119.15 358.6,120.01 359,119.68 359.4,119.25 359.8,120.75 360.2,121.49 360.6,121.23 361,120.85 361.4,118.97 361.8,117.77 362.2,118.08 362.6,119.12 363,118.38 363.4,120.54 363.8,120.17 364.2,121.91 364.6,121.04 365,121.33 365.4,122.03 365.8,122.02 366.2,120.07 366.6,122.2 367,120.81 367.4,120.25 367.8,120.6 368.2,120.58 368.6,120.14 369,118.78 369.4,117.86 369.8,118.06 370.2,119.82 370.6,119.9 371,119.44 371.4,120.43 371.8,118.94 372.2,118.53 372.6,118.14 373,118.61 373.4,119.11 373.8,120.36 374.2,118.64 374.6,119.96 375,121.48 375.4,118.63 375.8,118.88 376.2,119.45 376.6,119.27 377,119.53 377.4,120.88 377.8,119.65 378.2,118.65 378.6,119.16 379,120.38 379.4,122.18 379.8,120.18 380.2,120.11 380.6,120.76 381,119.58 381.4,120.78 381.8,121.03 382.2,120.45 382.6,119.65 383,119.97 383.4,118.78 383.8,121.35 384.2,120.9 384.6,120.92 385,122.23 385.4,119.15 385.8,121.21 386.2,119.35 386.6,123.19 387,120.28 387.4,120.33 387.8,121.53 388.2,119.38 388.6,117.62 389,119.37 389.4,119.63 389.8,119.15 390.2,120.59 390.6,120 393,185" fill="none" stroke="#000" stroke-width="1.15" stroke-linejoin="round" />
<polyline points="401.5,185 401.5,98.6 401.9,121 403,120.5 405,119 407,118.5 408.5,116 409.5,115.8 410.5,117.5 411.2,121 412,119 413,117.5 414,120.5 414.5,120.27 414.9,121.22 415.3,122.28 415.7,120.29 416.1,116.39 416.5,120.18 416.9,118.92 417.3,120.62 417.7,120.53 418.1,120.25 418.5,122.35 418.9,120.38 419.3,120.21 419.7,120.29 420.1,119.96 420.5,119.77 420.9,119.36 421.3,119.94 421.7,120.84 422.1,119.24 422.5,119.82 422.9,118.92 423.3,118.52 423.7,119.2 424.1,120.9 424.5,121.48 424.9,120.7 425.3,119.97 425.7,120.09 426.1,121.29 426.5,121.01 426.9,121.38 427.3,120.28 427.7,121.37 428.1,119.98 428.5,120.95 428.9,121.21 429.3,122.67 429.7,119.97 430.1,119.12 430.5,120.2 430.9,119.36 431.3,120.23 431.7,119.67 432.1,119.52 432.5,120.11 432.9,120.44 433.3,120.21 433.7,119.06 434.1,121.93 434.5,121.94 434.9,121.37 435.3,119.25 435.7,121.09 436.1,119.12 436.5,118.19 436.9,120.07 437.3,119.45 437.7,119.72 438.1,121.1 438.5,121.41 438.9,122.5 439.3,120.01 439.7,118.59 440.1,120.92 440.5,121 440.9,120.01 441.3,119.29 441.7,119.92 442.1,122.17 442.5,121.74 442.9,121.96 443.3,122.5 443.7,119.79 444.1,119.16 444.5,118.6 444.9,119.65 445.3,119.03 445.7,118.72 446.1,118.98 446.5,120.19 446.9,120.84 447.3,120.87 447.7,119.74 448.1,122.96 448.5,119.85 448.9,117.72 449.3,119.75 449.7,121.47 450.1,120.98 450.5,120.01 450.9,122.52 451.3,121.16 451.7,121.87 452.1,122.07 452.5,120.69 452.9,121.35 453.3,122.25 453.7,121.67 454.1,120.58 454.5,118.7 454.9,121.55 455.3,121 455.7,120.41 456.1,120.08 456.5,119.79 456.9,118.05 457.3,120.93 457.7,121.09 458.1,121.87 458.5,120.87 458.9,122.41 459.3,120.82 459.7,119.06 460.1,120.2 460.5,118.61 460.9,121.57 461.3,117.79 461.7,120.67 462.1,120.69 462.5,120.04 462.9,119.84 463.3,118.36 463.7,117.8 464.1,120.23 464.5,121.23 464.9,120.26 465.3,120.56 465.7,120.7 466.1,119.49 466.5,120.55 466.9,119.47 467.3,121.19 467.7,121.45 468.1,120.73 468.5,120.76 468.9,123.07 469.3,120.25 469.7,119.14 470.1,121.32 470.5,121.36 470.9,120.77 471.3,122.35 471.7,121.07 472.1,122.56 472.5,121.55 472.9,120.17 473.3,121.61 473.7,120.36 474.1,119.97 474.5,120.04 474.9,120.68 475.3,120.87 475.7,121.59 476.1,120.5 476.5,119.51 476.9,121.26 477.3,121.05 477.7,120.48 478.1,119.81 478.5,119.81 478.9,120.42 479.3,121.13 479.7,120.93 480.1,119.3 480.5,121.25 480.9,120.67 481.3,120.28 481.7,120.53 482.1,120.26 482.5,121.05 482.9,120.35 483.3,119.09 483.7,118.52 484.1,121.59 484.5,120.96 484.9,120.46 485.3,119.9 485.7,119.9 486.1,120.32 486.5,120.51 486.9,120.47 487.3,120.98 487.7,119.61 488.1,120.39 488.5,120.11 488.9,122.36 489.3,124.14 489.7,121.09 490.1,122.09 490.5,122.2 490.9,120.79 491.3,120.39 491.7,120.11 492.1,120.81 492.5,120.54 492.9,120.19 493.3,121.49 493.7,120.88 494.1,120.96 494.5,120.69 494.9,119.89 495.3,121.45 495.7,120.17 496.1,117.82 496.5,120.09 496.9,121.81 497.3,121.1 497.7,121.08 498.1,120.23 498.5,120.24 498.9,119.74 499.3,120.12 499.7,120.78 500.1,119.32 500.5,118.39 500.9,121.56 501.3,120.71 501.7,120.39 502.1,120.57 502.5,121.26 502.9,120.29 503.3,121.75 503.7,119.73 504.1,120.68 504.5,119.81 504.9,117.93 505.3,119.28 505.7,119.5 506.1,119.29 506.5,121.44 506.9,119.99 507.3,120.55 507.7,118.07 508.1,120.26 508.5,120.64 508.9,120.1 509.3,120.02 509.7,119.71 510.1,120.85 510.5,121.5 510.9,119.74 511.3,120.28 511.7,119.92 512.1,120.06 512.5,120.63 512.9,120.87 513.3,120.76 513.7,119.89 514.1,119.44 514.5,118.3 514.9,120.58 515.3,120.33 515.7,119.9 516.1,121.03 516.5,119.82 516.9,119.06 517.3,121.22 517.7,120.17 518.1,121.11 518.5,121.02 518.9,120.81 519.3,120.3 519.7,121.14 520.1,120.83 520.5,120.3 520.9,120.16 521.3,120.24 521.7,122.46 522.1,120.05 522.5,120.79 522.9,121.39 523.3,121.43 523.7,121.94 524.1,121.67 524.5,122.18 524.9,119.74 525.3,118.72 525.7,120.17 526.1,119.82 526.5,120.05 526.9,121.64 527.3,119.63 527.7,120.32 528.1,119.55 528.5,120.88 528.9,120.29 529.3,120.6 529.7,119.87 530.1,120.58 530.5,119.43 530.9,120.17 531.3,122.6 531.7,121.02 532.1,120.34 532.5,120.59 532.9,120.35 533.3,120.86 533.7,122.16 534.1,120.36 534.5,120.17 534.9,120.1 535.3,121.75 535.7,121.43 536.1,119.4 536.5,120.14 536.9,119.51 537.3,119.12 537.7,120.35 538.1,119.07 538.5,118.64 538.9,121.32 539.3,121.57 539.7,119.69 540.1,121.34 540.5,120.81 540.9,121.04 541.3,120 541.7,120.1 542.1,121.18 542.5,121.23 542.9,120.77 543.3,121.41 543.7,121.1 544.1,120.34 544.5,119.88 544.9,119.54 545.3,120.41 545.7,122.05 546.1,120.64 546.5,119.26 546.9,120.97 547.3,120.75 547.7,122.37 548.1,120.12 548.5,119.74 548.9,120.22 549.3,121.65 549.7,123.68 550.1,119.47 550.5,120.25 550.9,119.86 551.3,121.05 551.7,119.12 552.1,120.25 552.5,120.97 552.9,120.52 553.3,120.09 553.7,122.41 554.1,120.56 554.5,120.75 554.9,121.02 555.3,120.2 555.7,121.76 556.1,119.76 556.5,120.69 556.9,119.76 557.3,121.16 557.7,120.06 558.1,119.99 558.5,121.69 558.9,120.43 559.3,120.4 559.7,122.24 560.1,120.66 560.5,119.94 560.9,119.55 561.3,120.56 561.7,120.5 563.9,185" fill="none" stroke="#000" stroke-width="1.15" stroke-linejoin="round" />
<polyline points="570.7,185 570.7,93 571.3,96.5 572,91 572.5,89 572.7,37.5 573.2,37.5 573.3,90 573.8,97.5 574.5,93 575.2,90 575.8,94.5 576.5,92" fill="none" stroke="#000" stroke-width="1.15" stroke-linejoin="round" />
</g>
<text x="60" y="57.6" font-family="Liberation Sans, Arial, Helvetica, sans-serif" font-size="6.2" fill="#000">MAX</text>
<text x="60" y="68.1" font-family="Liberation Sans, Arial, Helvetica, sans-serif" font-size="6.2" fill="#000">AN</text>
<text x="60" y="90.4" font-family="Liberation Sans, Arial, Helvetica, sans-serif" font-size="6.2" fill="#000">TR</text>
<text x="60" y="99.3" font-family="Liberation Sans, Arial, Helvetica, sans-serif" font-size="6.2" fill="#000">AT</text>
<text x="60" y="119.6" font-family="Liberation Sans, Arial, Helvetica, sans-serif" font-size="6.2" fill="#000">UT1</text>
<text x="60" y="130.1" font-family="Liberation Sans, Arial, Helvetica, sans-serif" font-size="6.2" fill="#000">UT2</text>
<g clip-path="url(#c2)">
<polyline points="59.5,333.5 59.7,304.92 61.24,304.92 61.52,299.23 61.8,304.92 62.5,304.92 62.78,299.23 63.06,304.92 64.18,304.92 64.46,299.23 64.74,304.92 68.38,304.92 68.66,299.23 68.94,304.92 75.52,304.92 75.8,299.23 76.08,304.92 77.2,304.92 77.48,299.23 77.76,304.92 80.14,304.92 80.42,299.23 80.84,299.23 81.12,304.92 82.66,304.92 82.94,299.23 83.22,304.92 83.92,304.92 84.2,299.23 84.48,304.92 84.76,304.92 85.04,299.23 85.32,304.92 86.02,304.92 86.3,299.23 86.58,304.92 86.86,304.92 87.14,299.23 87.56,299.23 87.84,304.92 88.96,304.92 89.24,299.23 89.66,299.23 89.94,304.92 90.22,304.92 90.5,299.23 90.92,299.23 91.2,304.92 91.48,304.92 91.76,299.23 92.04,304.92 92.32,304.92 92.6,299.23 92.88,304.92 96.1,304.92 96.38,299.23 96.8,299.23 97.08,304.92 97.78,304.92 98.06,299.23 98.34,304.92 99.46,304.92 99.74,299.23 100.02,304.92 102.82,304.92 103.1,299.23 103.38,304.92 103.66,304.92 103.94,299.23 104.22,304.92 104.5,304.92 104.78,299.23 105.2,299.23 105.48,304.92 109.12,304.92 109.4,299.23 109.68,304.92 112.9,304.92 113.18,299.23 113.46,304.92 113.74,304.92 114.02,299.23 114.3,304.92 125.92,304.92 126.2,299.23 126.48,304.92 129.28,304.92 129.56,299.23 129.84,304.92 130.96,304.92 131.24,299.23 131.52,304.92 135.58,304.92 135.86,299.23 136.28,299.23 136.56,304.92 137.26,304.92 137.54,299.23 137.82,304.92 138.1,304.92 138.38,299.23 138.66,304.92 139.78,304.92 140.06,299.23 140.34,304.92 140.62,304.92 140.9,299.23 141.18,304.92 143.14,304.92 143.42,299.23 143.7,304.92 144.82,304.92 145.1,299.23 145.38,304.92 151.96,304.92 152.24,299.23 152.52,304.92 154.48,304.92 154.76,299.23 155.04,304.92 159.1,304.92 159.38,299.23 159.66,304.92 162.46,304.92 162.74,299.23 163.02,304.92 164.98,304.92 165.26,299.23 165.54,304.92 167.08,304.92 167.36,299.23 167.78,299.23 168.06,304.92 169.6,304.92 169.88,299.23 170.3,299.23 170.58,304.92 170.86,304.92 171.14,299.23 171.42,304.92 174.64,304.92 174.92,299.23 175.2,304.92 175.48,304.92 175.76,299.23 176.04,304.92 178.84,304.92 179.12,299.23 179.4,304.92 179.68,304.92 179.96,299.23 180.38,299.23 180.66,304.92 181.78,304.92 182.06,299.23 182.34,304.92 183.04,304.92 183.32,299.23 183.6,304.92 184.3,304.92 184.58,299.23 184.86,304.92 185.14,304.92 185.42,299.23 185.7,304.92 192.7,304.92 192.98,299.23 193.4,299.23 193.68,304.92 194.8,304.92 195.08,299.23 195.36,304.92 204.04,304.92 204.32,299.23 204.6,304.92 204.88,304.92 205.16,299.23 205.44,304.92 209.92,304.92 210.2,299.23 210.62,299.23 210.9,304.92 211.6,304.92 211.88,299.23 212.16,304.92 213.28,304.92 213.56,299.23 213.84,304.92 214.54,304.92 214.82,299.23 215.1,304.92 216.22,304.92 216.5,299.23 216.78,304.92 217.06,304.92 217.34,299.23 217.62,304.92 219,304.92 219.4,299.23 230.1,299.23 230.1,333.5 230.9,333.5 230.9,304.92 233.68,304.92 233.96,299.23 234.24,304.92 236.2,304.92 236.48,299.23 236.9,299.23 237.18,304.92 238.3,304.92 238.58,299.23 238.86,304.92 239.14,304.92 239.42,299.23 239.84,299.23 240.12,304.92 242.5,304.92 242.78,299.23 243.06,304.92 243.76,304.92 244.04,299.23 244.46,299.23 244.74,304.92 245.44,304.92 245.72,299.23 246.14,299.23 246.42,304.92 248.8,304.92 249.08,299.23 249.36,304.92 250.48,304.92 250.76,299.23 251.04,304.92 252.58,304.92 252.86,299.23 253.28,299.23 253.56,304.92 255.1,304.92 255.38,299.23 255.66,304.92 256.36,304.92 256.64,299.23 256.92,304.92 258.46,304.92 258.74,299.23 259.02,304.92 260.56,304.92 260.84,299.23 261.12,304.92 261.4,304.92 261.68,299.23 262.1,299.23 262.38,304.92 263.08,304.92 263.36,299.23 263.64,304.92 264.34,304.92 264.62,299.23 264.9,304.92 265.6,304.92 265.88,299.23 266.16,304.92 266.86,304.92 267.14,299.23 267.56,299.23 267.84,304.92 268.54,304.92 268.82,299.23 269.1,304.92 274.84,304.92 275.12,299.23 275.54,299.23 275.82,304.92 279.46,304.92 279.74,299.23 280.02,304.92 282.82,304.92 283.1,299.23 283.38,304.92 284.08,304.92 284.36,299.23 284.64,304.92 287.02,304.92 287.3,299.23 287.58,304.92 287.86,304.92 288.14,299.23 288.42,304.92 289.12,304.92 289.4,299.23 289.82,299.23 290.1,304.92 301.3,304.92 301.58,299.23 301.86,304.92 305.5,304.92 305.78,299.23 306.06,304.92 307.6,304.92 307.88,299.23 308.16,304.92 310.12,304.92 310.4,299.23 310.82,299.23 311.1,304.92 311.8,304.92 312.08,299.23 312.36,304.92 313.48,304.92 313.76,299.23 314.04,304.92 314.74,304.92 315.02,299.23 315.44,299.23 315.72,304.92 317.26,304.92 317.54,299.23 317.82,304.92 318.1,304.92 318.38,299.23 318.66,304.92 321.04,304.92 321.32,299.23 321.6,304.92 322.72,304.92 323,299.23 323.28,304.92 329.44,304.92 329.72,299.23 330,304.92 335.32,304.92 335.6,299.23 335.88,304.92 336.16,304.92 336.44,299.23 336.72,304.92 337.84,304.92 338.12,299.23 338.54,299.23 338.82,304.92 339.94,304.92 340.22,299.23 340.5,304.92 340.78,304.92 341.06,299.23 341.34,304.92 343.72,304.92 344,299.23 344.28,304.92 344.56,304.92 344.84,299.23 345.12,304.92 345.82,304.92 346.1,299.23 346.38,304.92 347.5,304.92 347.78,299.23 348.06,304.92 359.26,304.92 359.54,299.23 359.82,304.92 365.14,304.92 365.42,299.23 365.7,304.92 365.98,304.92 366.26,299.23 366.54,304.92 368.08,304.92 368.36,299.23 368.64,304.92 368.92,304.92 369.2,299.23 369.48,304.92 371.86,304.92 372.14,299.23 372.42,304.92 373.12,304.92 373.4,299.23 373.68,304.92 374.38,304.92 374.66,299.23 374.94,304.92 375.64,304.92 375.92,299.23 376.2,304.92 388.6,304.92 389,299.23 401.1,299.23 401.1,333.5 401.9,333.5 401.9,304.92 410.14,304.92 410.42,299.23 410.84,299.23 411.12,304.92 413.5,304.92 413.78,299.23 414.06,304.92 417.28,304.92 417.56,299.23 417.98,299.23 418.26,304.92 418.96,304.92 419.24,299.23 419.52,304.92 419.8,304.92 420.08,299.23 420.36,304.92 420.64,304.92 420.92,299.23 421.34,299.23 421.62,304.92 422.32,304.92 422.6,299.23 422.88,304.92 423.16,304.92 423.44,299.23 423.72,304.92 424.84,304.92 425.12,299.23 425.4,304.92 426.52,304.92 426.8,299.23 427.08,304.92 429.88,304.92 430.16,299.23 430.44,304.92 433.24,304.92 433.52,299.23 433.8,304.92 435.34,304.92 435.62,299.23 435.9,304.92 438.7,304.92 438.98,299.23 439.26,304.92 443.74,304.92 444.02,299.23 444.3,304.92 445,304.92 445.28,299.23 445.7,299.23 445.98,304.92 446.26,304.92 446.54,299.23 446.82,304.92 464.74,304.92 465.02,299.23 465.44,299.23 465.72,304.92 467.26,304.92 467.54,299.23 467.96,299.23 468.24,304.92 468.94,304.92 469.22,299.23 469.64,299.23 469.92,304.92 471.04,304.92 471.32,299.23 471.6,304.92 471.88,304.92 472.16,299.23 472.44,304.92 475.24,304.92 475.52,299.23 475.8,304.92 489.94,304.92 490.22,299.23 490.64,299.23 490.92,304.92 491.62,304.92 491.9,299.23 492.18,304.92 492.88,304.92 493.16,299.23 493.44,304.92 494.98,304.92 495.26,299.23 495.68,299.23 495.96,304.92 496.66,304.92 496.94,299.23 497.22,304.92 500.02,304.92 500.3,299.23 500.58,304.92 501.28,304.92 501.56,299.23 501.84,304.92 502.54,304.92 502.82,299.23 503.1,304.92 505.48,304.92 505.76,299.23 506.04,304.92 506.32,304.92 506.6,299.23 506.88,304.92 513.88,304.92 514.16,299.23 514.58,299.23 514.86,304.92 515.98,304.92 516.26,299.23 516.54,304.92 517.24,304.92 517.52,299.23 517.8,304.92 518.5,304.92 518.78,299.23 519.06,304.92 520.18,304.92 520.46,299.23 520.74,304.92 521.44,304.92 521.72,299.23 522,304.92 523.54,304.92 523.82,299.23 524.1,304.92 524.8,304.92 525.08,299.23 525.5,299.23 525.78,304.92 526.06,304.92 526.34,299.23 526.76,299.23 527.04,304.92 529.42,304.92 529.7,299.23 529.98,304.92 531.1,304.92 531.38,299.23 531.66,304.92 532.36,304.92 532.64,299.23 533.06,299.23 533.34,304.92 534.46,304.92 534.74,299.23 535.16,299.23 535.44,304.92 537.4,304.92 537.68,299.23 537.96,304.92 538.66,304.92 538.94,299.23 539.22,304.92 539.92,304.92 540.2,299.23 540.48,304.92 541.5,304.92 542.3,304.92 542.8,310.61 544.6,310.61 545.4,317.1 546,310.61 546.6,310.61 547.2,304.92 548.6,304.92 549.2,310.61 552.6,310.61 553.2,304.92 555,304.92 555.3,304.92 555.3,299.23 555.8,299.23 555.8,304.92 556.4,304.92 556.4,299.23 556.9,299.23 556.9,304.92 557.6,304.92 557.6,299.23 558.1,299.23 558.1,304.92 558.6,304.92 558.6,299.23 559.1,299.23 559.1,304.92 559.8,304.92 559.8,299.23 560.3,299.23 560.3,304.92 561,304.92 561,299.23 572.3,299.23 572.3,333.5 572.8,333.5 572.8,293.53 573.6,287.84 574.6,287.84 575.4,282.15 576.5,282.15" fill="none" stroke="#0000ff" stroke-width="1.0" stroke-linejoin="round" stroke-linejoin="miter"/>
</g>
<g clip-path="url(#c3)">
<polyline points="59.7,481.5 59.9,462 60.6,441.5 61.2,444 62,446 63,449.5 63.4,449.84 63.8,450.38 64.2,449.95 64.6,450.02 65,448.62 65.4,448.75 65.8,449.27 66.2,451.35 66.6,449.72 67,448.85 67.4,450.4 67.8,450.9 68.2,450.5 68.6,450.15 69,450.75 69.4,451.46 69.8,450.87 70.2,450.34 70.6,448.16 71,447.86 71.4,448.71 71.8,447.85 72.2,449.66 72.6,449.03 73,450.79 73.4,449.42 73.8,449.97 74.2,448.58 74.6,448.77 75,449.68 75.4,449.38 75.8,448.84 76.2,448.37 76.6,449.89 77,450.85 77.4,449.84 77.8,449.25 78.2,448.86 78.6,450.12 79,449.77 79.4,449.26 79.8,449.12 80.2,449.1 80.6,449.68 81,448.74 81.4,448.33 81.8,448.15 82.2,449.6 82.6,448.88 83,447.28 83.4,447.35 83.8,448.2 84.2,448.38 84.6,450.66 85,450.56 85.4,449.95 85.8,448.94 86.2,450.45 86.6,449.52 87,447.51 87.4,448.32 87.8,447.9 88.2,449.51 88.6,449.85 89,448.51 89.4,447.52 89.8,449.59 90.2,449.31 90.6,449.24 91,448.55 91.4,448.88 91.8,449.26 92.2,448.46 92.6,448.7 93,448.2 93.4,449.41 93.8,447.79 94.2,447.44 94.6,449.11 95,448.63 95.4,449.27 95.8,448.46 96.2,447.47 96.6,448.83 97,449.06 97.4,448.6 97.8,449.52 98.2,449.77 98.6,449.71 99,449.29 99.4,449.88 99.8,450.17 100.2,447.55 100.6,449.75 101,449.35 101.4,449.86 101.8,450.29 102.2,450.82 102.6,449.7 103,448.6 103.4,450.34 103.8,450.25 104.2,449.69 104.6,449.71 105,449.61 105.4,449.71 105.8,448.98 106.2,449.42 106.6,449.59 107,448.31 107.4,449.48 107.8,449.86 108.2,446.43 108.6,447.95 109,451.55 109.4,449.99 109.8,449.1 110.2,449.6 110.6,449.73 111,447.95 111.4,449.39 111.8,449.89 112.2,449.71 112.6,449.65 113,449.3 113.4,448.67 113.8,447.96 114.2,448.17 114.6,448.9 115,449.57 115.4,448.93 115.8,447.37 116.2,448.59 116.6,450.09 117,449.89 117.4,447.59 117.8,449.51 118.2,450.24 118.6,447.83 119,448.53 119.4,449.88 119.8,450.1 120.2,449.7 120.6,450.48 121,451.88 121.4,450.24 121.8,450.36 122.2,449.79 122.6,449.02 123,450.02 123.4,449.02 123.8,448.37 124.2,448.58 124.6,449.62 125,448.66 125.4,448.19 125.8,448.09 126.2,448.56 126.6,447.53 127,448.88 127.4,448.98 127.8,449.2 128.2,448.71 128.6,448.16 129,448.37 129.4,448.58 129.8,448.14 130.2,448.21 130.6,449.4 131,449.19 131.4,451.8 131.8,449.58 132.2,449.5 132.6,447.8 133,450.51 133.4,449.05 133.8,448.49 134.2,450.76 134.6,449.76 135,449.15 135.4,449.74 135.8,449.14 136.2,450.21 136.6,449.69 137,447.41 137.4,449.13 137.8,448.71 138.2,449.81 138.6,449.4 139,448.92 139.4,448.69 139.8,448.97 140.2,448.87 140.6,450.28 141,449.86 141.4,450.45 141.8,450.5 142.2,448.73 142.6,448.36 143,448.65 143.4,449.13 143.8,447.92 144.2,448.37 144.6,447.14 145,446.61 145.4,450.27 145.8,449.36 146.2,448.92 146.6,448.93 147,448.74 147.4,449.18 147.8,449.43 148.2,449.89 148.6,449.13 149,452.65 149.4,450.72 149.8,450.25 150.2,450.79 150.6,449.42 151,449.91 151.4,450.24 151.8,450.99 152.2,451.06 152.6,451.82 153,450.44 153.4,449.45 153.8,447.94 154.2,450.15 154.6,449.22 155,450.14 155.4,450.79 155.8,450.21 156.2,450.04 156.6,448.47 157,449.5 157.4,449.62 157.8,450.11 158.2,451.22 158.6,448.59 159,449 159.4,449.36 159.8,447.94 160.2,449.29 160.6,448.72 161,447.6 161.4,448.3 161.8,448.85 162.2,448.66 162.6,448.92 163,449.95 163.4,450.33 163.8,452.15 164.2,450.97 164.6,447.77 165,449.4 165.4,448.11 165.8,448.79 166.2,448.26 166.6,450.19 167,450.98 167.4,448.77 167.8,449.14 168.2,449.41 168.6,449.63 169,449.79 169.4,449.34 169.8,448.42 170.2,448.05 170.6,448.37 171,447.87 171.4,449.76 171.8,450.86 172.2,451.79 172.6,451.18 173,450.25 173.4,449.61 173.8,448.92 174.2,448.68 174.6,450.57 175,450.73 175.4,449.2 175.8,449.46 176.2,449.7 176.6,450.21 177,448.81 177.4,448.14 177.8,449.46 178.2,450.04 178.6,449.77 179,449.38 179.4,449.27 179.8,448.99 180.2,448.75 180.6,447.73 181,448.19 181.4,450.32 181.8,450.26 182.2,450.02 182.6,450.84 183,449.61 183.4,450.61 183.8,449.6 184.2,449.75 184.6,449.49 185,449.19 185.4,450.05 185.8,450.93 186.2,449.51 186.6,448.1 187,448.95 187.4,449.85 187.8,448.9 188.2,448.25 188.6,448.63 189,449.65 189.4,447.77 189.8,449.31 190.2,449.05 190.6,448.9 191,451.47 191.4,449.66 191.8,449.41 192.2,449.25 192.6,449.55 193,450.25 193.4,450.25 193.8,449.95 194.2,448.54 194.6,448.36 195,449.82 195.4,448.36 195.8,447.78 196.2,449.13 196.6,447.8 197,448.25 197.4,449.2 197.8,447.17 198.2,448.5 198.6,449.48 199,449.15 199.4,449.33 199.8,448.32 200.2,449.91 200.6,451.86 201,450.9 201.4,452.17 201.8,450.04 202.2,449 202.6,447.34 203,447.63 203.4,448.56 203.8,449.88 204.2,450.09 204.6,450.15 205,448.12 205.4,447.82 205.8,448.02 206.2,450.37 206.6,450.29 207,449.11 207.4,449.36 207.8,448.83 208.2,447.95 208.6,448.37 209,450.11 209.4,448.73 209.8,449.76 210.2,450.73 210.6,451.95 211,451.79 211.4,449.32 211.8,449.73 212.2,450.23 212.6,448.38 213,447.23 213.4,449.19 213.8,449.58 214.2,449.9 214.6,450.2 215,449.16 215.4,448.62 215.8,448.23 216.2,448.8 216.6,449.53 217,449.07 217.4,447.42 217.8,449.21 218.2,450.34 218.6,450.19 219,450.94 219.6,448.6 230.6,448.6 231,448.87 231.4,449.16 231.8,451.16 232.2,449.8 232.6,447.63 233,449.32 233.4,449.04 233.8,448.85 234.2,447.42 234.6,449.28 235,450.63 235.4,449.71 235.8,447.6 236.2,447.36 236.6,448.94 237,449.93 237.4,450.92 237.8,451 238.2,450.53 238.6,449.73 239,449.22 239.4,449.95 239.8,450.21 240.2,448.09 240.6,449.97 241,450.02 241.4,450.09 241.8,449.24 242.2,449.48 242.6,450.07 243,449.98 243.4,448.93 243.8,449.16 244.2,449.26 244.6,449.87 245,449.2 245.4,449.35 245.8,451.27 246.2,448.72 246.6,449.89 247,449.84 247.4,449.16 247.8,449.24 248.2,448.23 248.6,448.67 249,449.06 249.4,449.34 249.8,450.19 250.2,449.29 250.6,450.16 251,448.96 251.4,448.21 251.8,449.03 252.2,450.17 252.6,448.38 253,447.76 253.4,448.67 253.8,447.62 254.2,447.62 254.6,448.03 255,448.83 255.4,448.35 255.8,449.89 256.2,447.72 256.6,448.95 257,448.57 257.4,449.64 257.8,449.64 258.2,451.39 258.6,449.54 259,450.53 259.4,449.76 259.8,450.55 260.2,450.78 260.6,450.7 261,449.26 261.4,450.02 261.8,449.63 262.2,448.88 262.6,449.17 263,449.87 263.4,451.17 263.8,450.76 264.2,449.17 264.6,447.79 265,447.03 265.4,448.99 265.8,449.92 266.2,450.34 266.6,449.73 267,448.35 267.4,449.95 267.8,448.87 268.2,449.04 268.6,449.47 269,449.49 269.4,449.62 269.8,449.56 270.2,448.93 270.6,450.78 271,449.68 271.4,448.93 271.8,450.29 272.2,450.44 272.6,450.56 273,449.78 273.4,449.88 273.8,447.45 274.2,448.19 274.6,447.59 275,447.6 275.4,447.44 275.8,448.93 276.2,448.86 276.6,448.05 277,449.05 277.4,448.78 277.8,449.25 278.2,450.11 278.6,449.2 279,449.6 279.4,450.45 279.8,449.54 280.2,448.5 280.6,447.78 281,448.55 281.4,449.63 281.8,448.34 282.2,448.49 282.6,448.37 283,449.42 283.4,449.1 283.8,448.22 284.2,449.7 284.6,448.63 285,450.02 285.4,449.84 285.8,449.99 286.2,449.32 286.6,451.1 287,450.15 287.4,449.76 287.8,450.63 288.2,450.47 288.6,448.9 289,447.7 289.4,449.53 289.8,448.85 290.2,449.15 290.6,448.8 291,449.4 291.4,448.42 291.8,447.2 292.2,448.39 292.6,449.27 293,448.45 293.4,449.08 293.8,448.82 294.2,450.22 294.6,449.86 295,448.4 295.4,447.61 295.8,447.4 296.2,448.12 296.6,449.54 297,449.73 297.4,450.48 297.8,449.57 298.2,448.7 298.6,448.64 299,450.23 299.4,449.4 299.8,450.52 300.2,449.61 300.6,448.97 301,448.5 301.4,449.41 301.8,449.51 302.2,448.27 302.6,449.43 303,449.75 303.4,451.25 303.8,451.01 304.2,448.9 304.6,448.83 305,450.32 305.4,450.75 305.8,450.02 306.2,449.04 306.6,450.27 307,448.96 307.4,448.3 307.8,449.85 308.2,450.16 308.6,449.15 309,450.01 309.4,448.85 309.8,450.76 310.2,449.68 310.6,450.24 311,449.71 311.4,451.57 311.8,448.93 312.2,449.05 312.6,448.62 313,448.62 313.4,448.06 313.8,449.23 314.2,451.04 314.6,449.37 315,449.49 315.4,448.89 315.8,448.66 316.2,448.9 316.6,449.2 317,449.11 317.4,449.15 317.8,450.72 318.2,448.94 318.6,450.27 319,450.56 319.4,449.39 319.8,449.97 320.2,450.79 320.6,449.37 321,450.95 321.4,450.5 321.8,451.03 322.2,449.02 322.6,449.01 323,451.08 323.4,448.56 323.8,447.88 324.2,449.64 324.6,449.91 325,450.87 325.4,447.52 325.8,447.61 326.2,448.31 326.6,450.26 327,448.91 327.4,449.71 327.8,449.06 328.2,449.54 328.6,448.53 329,448.93 329.4,448.91 329.8,449.05 330.2,450.46 330.6,450.47 331,450.85 331.4,450.48 331.8,450.19 332.2,450.45 332.6,450.15 333,447.68 333.4,447.82 333.8,448.93 334.2,446.96 334.6,446.74 335,448.74 335.4,448.69 335.8,448.49 336.2,448.81 336.6,450.81 337,450.96 337.4,448.9 337.8,448.94 338.2,449.92 338.6,448.68 339,449.8 339.4,450.44 339.8,451.48 340.2,449.95 340.6,450.33 341,449.57 341.4,449.97 341.8,449.89 342.2,451.56 342.6,449.07 343,449.41 343.4,450.39 343.8,448.49 344.2,449.46 344.6,449.46 345,448.95 345.4,450.07 345.8,449.28 346.2,449.37 346.6,450.6 347,448.86 347.4,449.36 347.8,449.12 348.2,448.87 348.6,448.5 349,449.19 349.4,450.41 349.8,450.19 350.2,451.45 350.6,450.52 351,449.91 351.4,448.28 351.8,448.02 352.2,447.87 352.6,449.55 353,448.67 353.4,449.63 353.8,450.19 354.2,450.49 354.6,449.13 355,448.91 355.4,449.61 355.8,451.73 356.2,451.73 356.6,450.59 357,448.45 357.4,448.44 357.8,449.82 358.2,449.78 358.6,450.23 359,449.55 359.4,449.13 359.8,448.1 360.2,448.81 360.6,449.81 361,449.68 361.4,449.36 361.8,447.05 362.2,448.35 362.6,449.68 363,448.4 363.4,449.43 363.8,448.34 364.2,449.25 364.6,447.33 365,447.64 365.4,448.42 365.8,448.4 366.2,450.13 366.6,450.65 367,449.19 367.4,447.92 367.8,448.91 368.2,449.77 368.6,449.19 369,448.72 369.4,448.3 369.8,450.23 370.2,449.38 370.6,449.36 371,450.24 371.4,448.19 371.8,449.82 372.2,449.88 372.6,449.75 373,449.58 373.4,450.58 373.8,448.77 374.2,448.68 374.6,449.04 375,449.26 375.4,449.8 375.8,450.43 376.2,450.05 376.6,448.89 377,450.27 377.4,449.41 377.8,449.51 378.2,449.48 378.6,449.28 379,450.92 379.4,450.34 379.8,449.1 380.2,449.5 380.6,449.6 381,449.4 381.4,450.36 381.8,448.17 382.2,449.54 382.6,448.54 383,448.08 383.4,448.85 383.8,449.87 384.2,450.07 384.6,448.65 385,451.24 385.4,449.4 385.8,448.64 386.2,450.12 386.6,449.34 387,448.88 387.4,449.06 387.8,450.34 388.2,450.52 388.6,448.78 389,449.1 389.4,449.01 390,448.2 401.6,448.2 402,431 402.3,457 402.8,448 404,446 405,449.5 406.5,445.5 408,447.5 408.5,448.99 408.9,448.88 409.3,447.89 409.7,448.75 410.1,447.07 410.5,447.79 410.9,449.74 411.3,448.17 411.7,449.28 412.1,449.08 412.5,448.97 412.9,446.99 413.3,448.52 413.7,448.17 414.1,449.53 414.5,450.28 414.9,450.32 415.3,449.28 415.7,448.92 416.1,448.73 416.5,449.54 416.9,449.66 417.3,448.41 417.7,450.06 418.1,448.31 418.5,448.18 418.9,447.82 419.3,449.53 419.7,448.31 420.1,448.25 420.5,448.44 420.9,448.69 421.3,448.07 421.7,448.87 422.1,448.78 422.5,448.57 422.9,450.19 423.3,450.37 423.7,450.75 424.1,449.21 424.5,447.54 424.9,448.49 425.3,450.88 425.7,450.13 426.1,450.09 426.5,449.24 426.9,447.3 427.3,448.28 427.7,447.2 428.1,449.89 428.5,449.15 428.9,448.66 429.3,448.52 429.7,449.41 430.1,447.51 430.5,449.23 430.9,449.7 431.3,451.05 431.7,448.29 432.1,449.3 432.5,449.97 432.9,450.75 433.3,447.68 433.7,448.25 434.1,449.59 434.5,447.57 434.9,448.13 435.3,449.11 435.7,449.2 436.1,449.1 436.5,449.01 436.9,449.74 437.3,448.06 437.7,448.61 438.1,448 438.5,449.44 438.9,449.58 439.3,450.31 439.7,449.02 440.1,450.9 440.5,450.25 440.9,450.14 441.3,448.61 441.7,448.85 442.1,447.84 442.5,448.79 442.9,448.5 443.3,449.22 443.7,448.73 444.1,448.17 444.5,450.59 444.9,451.61 445.3,450.75 445.7,449.59 446.1,451.27 446.5,450.33 446.9,450.46 447.3,447.88 447.7,448.32 448.1,451.33 448.5,449.59 448.9,449.65 449.3,449.7 449.7,449.02 450.1,448.1 450.5,449.51 450.9,450.33 451.3,447.9 451.7,449.11 452.1,448.57 452.5,448.46 452.9,448.09 453.3,448.03 453.7,449.46 454.1,450.38 454.5,451.47 454.9,450.23 455.3,449.74 455.7,450.07 456.1,450.27 456.5,449.54 456.9,449.09 457.3,446.9 457.7,447.41 458.1,446.82 458.5,447.13 458.9,447.99 459.3,449.4 459.7,449.69 460.1,449.55 460.5,449.81 460.9,449.42 461.3,449.12 461.7,449.86 462.1,448.82 462.5,449.66 462.9,450.01 463.3,451.56 463.7,450.76 464.1,449.37 464.5,448.81 464.9,448.42 465.3,449.15 465.7,448.19 466.1,448.15 466.5,448.06 466.9,449.48 467.3,447.99 467.7,450.01 468.1,449.66 468.5,449.01 468.9,448.32 469.3,449.11 469.7,449.8 470.1,450 470.5,448.83 470.9,449.14 471.3,450.26 471.7,448.31 472.1,448.29 472.5,449.97 472.9,449.79 473.3,449.57 473.7,450.18 474.1,449.87 474.5,448.35 474.9,449.23 475.3,448.55 475.7,449.24 476.1,448.68 476.5,447.58 476.9,447.81 477.3,448.48 477.7,450.75 478.1,449.77 478.5,450.57 478.9,447.52 479.3,447.66 479.7,449.6 480.1,447.81 480.5,447.99 480.9,449.41 481.3,449.64 481.7,449.8 482.1,450.13 482.5,450.04 482.9,450.02 483.3,449.79 483.7,448.63 484.1,449.98 484.5,448.2 484.9,447.58 485.3,447.73 485.7,448.07 486.1,448.22 486.5,448.66 486.9,449.98 487.3,450.88 487.7,449.9 488.1,449.59 488.5,448.51 488.9,447.72 489.3,448.24 489.7,450.07 490.1,448.07 490.5,448.46 490.9,448.87 491.3,450.48 491.7,449.55 492.1,448.76 492.5,447.54 492.9,449.55 493.3,449.96 493.7,450.2 494.1,449.44 494.5,449.44 494.9,450.05 495.3,448.66 495.7,447.63 496.1,447.48 496.5,448.68 496.9,448.35 497.3,449.18 497.7,448.9 498.1,449.4 498.5,449.15 498.9,447.46 499.3,449.67 499.7,448.72 500.1,447.67 500.5,447.89 500.9,448.64 501.3,450.19 501.7,446.58 502.1,447.9 502.5,448.11 502.9,449.47 503.3,450.73 503.7,449.69 504.1,450.36 504.5,449.8 504.9,447.93 505.3,448.47 505.7,448.91 506.1,448.67 506.5,448.75 506.9,449.27 507.3,449.35 507.7,450.23 508.1,448.88 508.5,450.9 508.9,449.44 509.3,449.38 509.7,449.09 510.1,448.45 510.5,448.89 510.9,449.36 511.3,449.81 511.7,450.28 512.1,449.5 512.5,448.3 512.9,449.25 513.3,449.75 513.7,448.86 514.1,449.16 514.5,449.8 514.9,449.72 515.3,449.91 515.7,448.63 516.1,448.72 516.5,447.98 516.9,449.34 517.3,449.06 517.7,448.48 518.1,448.9 518.5,449.14 518.9,446.77 519.3,449.41 519.7,448.23 520.1,449.69 520.5,450.4 520.9,450.17 521.3,447.98 521.7,449.33 522.1,449.45 522.5,448.69 522.9,449.45 523.3,449.33 523.7,450.85 524.1,448.86 524.5,448.63 524.9,448.24 525.3,448.13 525.7,450.1 526.1,449.53 526.5,447.99 526.9,449.16 527.3,448.29 527.7,449.52 528.1,448.61 528.5,448.55 528.9,449.17 529.3,450.37 529.7,448.54 530.1,448.41 530.5,447.86 530.9,449.7 531.3,449.63 531.7,449.06 532.1,449.85 532.5,448.41 532.9,448.78 533.3,447.65 533.7,447.98 534.1,447.34 534.5,447.67 534.9,447.57 535.3,447.17 535.7,448.81 536.1,448.39 536.5,448.38 536.9,449.82 537.3,449.21 537.7,449.73 538.1,448.75 538.5,449.15 538.9,447.62 539.3,448.07 539.7,450.03 540.1,450.45 540.5,450.8 540.9,450.14 541.3,448.2 541.7,449.12 542.1,448.41 542.5,448.16 542.9,448.69 543.3,451.24 543.7,448.35 544.1,448.58 544.5,448.95 544.9,448.37 545.3,450.77 545.7,449.89 546.1,449.86 546.5,448.68 546.9,449.27 547.3,448.22 547.7,449.59 548.1,450.02 548.5,449.23 548.9,449.15 549.3,448.08 549.7,447.98 550.1,447.77 550.5,449.77 550.9,448.29 551.3,447.79 551.7,446.59 552.1,447.26 552.5,449.46 552.9,450.69 553.3,449.4 553.7,449.28 554.1,449.79 554.5,449.63 554.9,447.58 555.3,448.36 555.7,449.61 556.1,449.07 556.5,447.67 556.9,448.24 557.3,449.81 557.7,449.82 558.1,449.18 558.5,448.17 558.9,449.68 559.3,448.65 559.8,446.8 572.2,446.8 572.6,411 573.1,431 573.8,428 574.5,430.5 575.4,424 576.5,421" fill="none" stroke="#0000ff" stroke-width="1.0" stroke-linejoin="round" />
</g>
<line x1="99.5" y1="185.5" x2="99.5" y2="182.7" class="t"/>
<line x1="99.5" y1="37.5" x2="99.5" y2="40.3" class="t"/>
<line x1="139.5" y1="185.5" x2="139.5" y2="182.7" class="t"/>
<line x1="139.5" y1="37.5" x2="139.5" y2="40.3" class="t"/>
<line x1="178.5" y1="185.5" x2="178.5" y2="182.7" class="t"/>
<line x1="178.5" y1="37.5" x2="178.5" y2="40.3" class="t"/>
<line x1="218.5" y1="185.5" x2="218.5" y2="182.7" class="t"/>
<line x1="218.5" y1="37.5" x2="218.5" y2="40.3" class="t"/>
<line x1="258.5" y1="185.5" x2="258.5" y2="182.7" class="t"/>
<line x1="258.5" y1="37.5" x2="258.5" y2="40.3" class="t"/>
<line x1="298.5" y1="185.5" x2="298.5" y2="182.7" class="t"/>
<line x1="298.5" y1="37.5" x2="298.5" y2="40.3" class="t"/>
<line x1="337.5" y1="185.5" x2="337.5" y2="182.7" class="t"/>
<line x1="337.5" y1="37.5" x2="337.5" y2="40.3" class="t"/>
<line x1="377.5" y1="185.5" x2="377.5" y2="182.7" class="t"/>
<line x1="377.5" y1="37.5" x2="377.5" y2="40.3" class="t"/>
<line x1="417.5" y1="185.5" x2="417.5" y2="182.7" class="t"/>
<line x1="417.5" y1="37.5" x2="417.5" y2="40.3" class="t"/>
<line x1="457.5" y1="185.5" x2="457.5" y2="182.7" class="t"/>
<line x1="457.5" y1="37.5" x2="457.5" y2="40.3" class="t"/>
<line x1="496.5" y1="185.5" x2="496.5" y2="182.7" class="t"/>
<line x1="496.5" y1="37.5" x2="496.5" y2="40.3" class="t"/>
<line x1="536.5" y1="185.5" x2="536.5" y2="182.7" class="t"/>
<line x1="536.5" y1="37.5" x2="536.5" y2="40.3" class="t"/>
<line x1="99.5" y1="333.5" x2="99.5" y2="330.7" class="t"/>
<line x1="99.5" y1="185.5" x2="99.5" y2="188.3" class="t"/>
<line x1="139.5" y1="333.5" x2="139.5" y2="330.7" class="t"/>
<line x1="139.5" y1="185.5" x2="139.5" y2="188.3" class="t"/>
<line x1="178.5" y1="333.5" x2="178.5" y2="330.7" class="t"/>
<line x1="178.5" y1="185.5" x2="178.5" y2="188.3" class="t"/>
<line x1="218.5" y1="333.5" x2="218.5" y2="330.7" class="t"/>
<line x1="218.5" y1="185.5" x2="218.5" y2="188.3" class="t"/>
<line x1="258.5" y1="333.5" x2="258.5" y2="330.7" class="t"/>
<line x1="258.5" y1="185.5" x2="258.5" y2="188.3" class="t"/>
<line x1="298.5" y1="333.5" x2="298.5" y2="330.7" class="t"/>
<line x1="298.5" y1="185.5" x2="298.5" y2="188.3" class="t"/>
<line x1="337.5" y1="333.5" x2="337.5" y2="330.7" class="t"/>
<line x1="337.5" y1="185.5" x2="337.5" y2="188.3" class="t"/>
<line x1="377.5" y1="333.5" x2="377.5" y2="330.7" class="t"/>
<line x1="377.5" y1="185.5" x2="377.5" y2="188.3" class="t"/>
<line x1="417.5" y1="333.5" x2="417.5" y2="330.7" class="t"/>
<line x1="417.5" y1="185.5" x2="417.5" y2="188.3" class="t"/>
<line x1="457.5" y1="333.5" x2="457.5" y2="330.7" class="t"/>
<line x1="457.5" y1="185.5" x2="457.5" y2="188.3" class="t"/>
<line x1="496.5" y1="333.5" x2="496.5" y2="330.7" class="t"/>
<line x1="496.5" y1="185.5" x2="496.5" y2="188.3" class="t"/>
<line x1="536.5" y1="333.5" x2="536.5" y2="330.7" class="t"/>
<line x1="536.5" y1="185.5" x2="536.5" y2="188.3" class="t"/>
<line x1="99.5" y1="481.5" x2="99.5" y2="478.7" class="t"/>
<line x1="99.5" y1="333.5" x2="99.5" y2="336.3" class="t"/>
<line x1="139.5" y1="481.5" x2="139.5" y2="478.7" class="t"/>
<line x1="139.5" y1="333.5" x2="139.5" y2="336.3" class="t"/>
<line x1="178.5" y1="481.5" x2="178.5" y2="478.7" class="t"/>
<line x1="178.5" y1="333.5" x2="178.5" y2="336.3" class="t"/>
<line x1="218.5" y1="481.5" x2="218.5" y2="478.7" class="t"/>
<line x1="218.5" y1="333.5" x2="218.5" y2="336.3" class="t"/>
<line x1="258.5" y1="481.5" x2="258.5" y2="478.7" class="t"/>
<line x1="258.5" y1="333.5" x2="258.5" y2="336.3" class="t"/>
<line x1="298.5" y1="481.5" x2="298.5" y2="478.7" class="t"/>
<line x1="298.5" y1="333.5" x2="298.5" y2="336.3" class="t"/>
<line x1="337.5" y1="481.5" x2="337.5" y2="478.7" class="t"/>
<line x1="337.5" y1="333.5" x2="337.5" y2="336.3" class="t"/>
<line x1="377.5" y1="481.5" x2="377.5" y2="478.7" class="t"/>
<line x1="377.5" y1="333.5" x2="377.5" y2="336.3" class="t"/>
<line x1="417.5" y1="481.5" x2="417.5" y2="478.7" class="t"/>
<line x1="417.5" y1="333.5" x2="417.5" y2="336.3" class="t"/>
<line x1="457.5" y1="481.5" x2="457.5" y2="478.7" class="t"/>
<line x1="457.5" y1="333.5" x2="457.5" y2="336.3" class="t"/>
<line x1="496.5" y1="481.5" x2="496.5" y2="478.7" class="t"/>
<line x1="496.5" y1="333.5" x2="496.5" y2="336.3" class="t"/>
<line x1="536.5" y1="481.5" x2="536.5" y2="478.7" class="t"/>
<line x1="536.5" y1="333.5" x2="536.5" y2="336.3" class="t"/>
<line x1="59.5" y1="170.5" x2="62.3" y2="170.5" class="t"/>
<line x1="59.5" y1="155.5" x2="62.3" y2="155.5" class="t"/>
<line x1="59.5" y1="140.5" x2="62.3" y2="140.5" class="t"/>
<line x1="59.5" y1="126.5" x2="62.3" y2="126.5" class="t"/>
<line x1="59.5" y1="111.5" x2="62.3" y2="111.5" class="t"/>
<line x1="59.5" y1="96.5" x2="62.3" y2="96.5" class="t"/>
<line x1="59.5" y1="81.5" x2="62.3" y2="81.5" class="t"/>
<line x1="59.5" y1="66.5" x2="62.3" y2="66.5" class="t"/>
<line x1="576.5" y1="49.5" x2="573.7" y2="49.5" class="t"/>
<line x1="576.5" y1="61.5" x2="573.7" y2="61.5" class="t"/>
<line x1="576.5" y1="74.5" x2="573.7" y2="74.5" class="t"/>
<line x1="576.5" y1="86.5" x2="573.7" y2="86.5" class="t"/>
<line x1="576.5" y1="98.5" x2="573.7" y2="98.5" class="t"/>
<line x1="576.5" y1="111.5" x2="573.7" y2="111.5" class="t"/>
<line x1="576.5" y1="123.5" x2="573.7" y2="123.5" class="t"/>
<line x1="576.5" y1="135.5" x2="573.7" y2="135.5" class="t"/>
<line x1="576.5" y1="148.5" x2="573.7" y2="148.5" class="t"/>
<line x1="576.5" y1="160.5" x2="573.7" y2="160.5" class="t"/>
<line x1="576.5" y1="172.5" x2="573.7" y2="172.5" class="t"/>
<line x1="59.5" y1="321.5" x2="62.3" y2="321.5" class="t"/>
<line x1="576.5" y1="321.5" x2="573.7" y2="321.5" class="t"/>
<line x1="59.5" y1="310.5" x2="62.3" y2="310.5" class="t"/>
<line x1="576.5" y1="310.5" x2="573.7" y2="310.5" class="t"/>
<line x1="59.5" y1="299.5" x2="62.3" y2="299.5" class="t"/>
<line x1="576.5" y1="299.5" x2="573.7" y2="299.5" class="t"/>
<line x1="59.5" y1="287.5" x2="62.3" y2="287.5" class="t"/>
<line x1="576.5" y1="287.5" x2="573.7" y2="287.5" class="t"/>
<line x1="59.5" y1="276.5" x2="62.3" y2="276.5" class="t"/>
<line x1="576.5" y1="276.5" x2="573.7" y2="276.5" class="t"/>
<line x1="59.5" y1="265.5" x2="62.3" y2="265.5" class="t"/>
<line x1="576.5" y1="265.5" x2="573.7" y2="265.5" class="t"/>
<line x1="59.5" y1="253.5" x2="62.3" y2="253.5" class="t"/>
<line x1="576.5" y1="253.5" x2="573.7" y2="253.5" class="t"/>
<line x1="59.5" y1="242.5" x2="62.3" y2="242.5" class="t"/>
<line x1="576.5" y1="242.5" x2="573.7" y2="242.5" class="t"/>
<line x1="59.5" y1="230.5" x2="62.3" y2="230.5" class="t"/>
<line x1="576.5" y1="230.5" x2="573.7" y2="230.5" class="t"/>
<line x1="59.5" y1="219.5" x2="62.3" y2="219.5" class="t"/>
<line x1="576.5" y1="219.5" x2="573.7" y2="219.5" class="t"/>
<line x1="59.5" y1="208.5" x2="62.3" y2="208.5" class="t"/>
<line x1="576.5" y1="208.5" x2="573.7" y2="208.5" class="t"/>
<line x1="59.5" y1="196.5" x2="62.3" y2="196.5" class="t"/>
<line x1="576.5" y1="196.5" x2="573.7" y2="196.5" class="t"/>
<line x1="59.5" y1="462.5" x2="62.3" y2="462.5" class="t"/>
<line x1="576.5" y1="462.5" x2="573.7" y2="462.5" class="t"/>
<line x1="59.5" y1="444.5" x2="62.3" y2="444.5" class="t"/>
<line x1="576.5" y1="444.5" x2="573.7" y2="444.5" class="t"/>
<line x1="59.5" y1="425.5" x2="62.3" y2="425.5" class="t"/>
<line x1="576.5" y1="425.5" x2="573.7" y2="425.5" class="t"/>
<line x1="59.5" y1="407.5" x2="62.3" y2="407.5" class="t"/>
<line x1="576.5" y1="407.5" x2="573.7" y2="407.5" class="t"/>
<line x1="59.5" y1="388.5" x2="62.3" y2="388.5" class="t"/>
<line x1="576.5" y1="388.5" x2="573.7" y2="388.5" class="t"/>
<line x1="59.5" y1="370.5" x2="62.3" y2="370.5" class="t"/>
<line x1="576.5" y1="370.5" x2="573.7" y2="370.5" class="t"/>
<rect x="59.5" y="37.5" width="517" height="148" fill="none" stroke="#383838" stroke-width="1"/>
<rect x="59.5" y="185.5" width="517" height="148" fill="none" stroke="#383838" stroke-width="1"/>
<rect x="59.5" y="333.5" width="517" height="148" fill="none" stroke="#383838" stroke-width="1"/>
<text x="57.8" y="173.03" font-family="Liberation Sans, Arial, Helvetica, sans-serif" font-size="9.25" text-anchor="end" fill="#000" >110</text>
<text x="57.8" y="158.23" font-family="Liberation Sans, Arial, Helvetica, sans-serif" font-size="9.25" text-anchor="end" fill="#000" >120</text>
<text x="57.8" y="143.43" font-family="Liberation Sans, Arial, Helvetica, sans-serif" font-size="9.25" text-anchor="end" fill="#000" >130</text>
<text x="57.8" y="128.63" font-family="Liberation Sans, Arial, Helvetica, sans-serif" font-size="9.25" text-anchor="end" fill="#000" >140</text>
<text x="57.8" y="113.83" font-family="Liberation Sans, Arial, Helvetica, sans-serif" font-size="9.25" text-anchor="end" fill="#000" >150</text>
<text x="57.8" y="99.03" font-family="Liberation Sans, Arial, Helvetica, sans-serif" font-size="9.25" text-anchor="end" fill="#000" >160</text>
<text x="57.8" y="84.23" font-family="Liberation Sans, Arial, Helvetica, sans-serif" font-size="9.25" text-anchor="end" fill="#000" >170</text>
<text x="57.8" y="69.43" font-family="Liberation Sans, Arial, Helvetica, sans-serif" font-size="9.25" text-anchor="end" fill="#000" >180</text>
<text x="579.2" y="52.31" font-family="Liberation Sans, Arial, Helvetica, sans-serif" font-size="9.25" text-anchor="start" fill="#000" >1:35</text>
<text x="579.2" y="64.65" font-family="Liberation Sans, Arial, Helvetica, sans-serif" font-size="9.25" text-anchor="start" fill="#000" >1:40</text>
<text x="579.2" y="76.98" font-family="Liberation Sans, Arial, Helvetica, sans-serif" font-size="9.25" text-anchor="start" fill="#000" >1:45</text>
<text x="579.2" y="89.31" font-family="Liberation Sans, Arial, Helvetica, sans-serif" font-size="9.25" text-anchor="start" fill="#000" >1:50</text>
<text x="579.2" y="101.65" font-family="Liberation Sans, Arial, Helvetica, sans-serif" font-size="9.25" text-anchor="start" fill="#000" >1:55</text>
<text x="579.2" y="113.98" font-family="Liberation Sans, Arial, Helvetica, sans-serif" font-size="9.25" text-anchor="start" fill="#000" >2:00</text>
<text x="579.2" y="126.31" font-family="Liberation Sans, Arial, Helvetica, sans-serif" font-size="9.25" text-anchor="start" fill="#000" >2:05</text>
<text x="579.2" y="138.65" font-family="Liberation Sans, Arial, Helvetica, sans-serif" font-size="9.25" text-anchor="start" fill="#000" >2:10</text>
<text x="579.2" y="150.98" font-family="Liberation Sans, Arial, Helvetica, sans-serif" font-size="9.25" text-anchor="start" fill="#000" >2:15</text>
<text x="579.2" y="163.31" font-family="Liberation Sans, Arial, Helvetica, sans-serif" font-size="9.25" text-anchor="start" fill="#000" >2:20</text>
<text x="579.2" y="175.65" font-family="Liberation Sans, Arial, Helvetica, sans-serif" font-size="9.25" text-anchor="start" fill="#000" >2:25</text>
<text x="57.8" y="324.35" font-family="Liberation Sans, Arial, Helvetica, sans-serif" font-size="9.25" text-anchor="end" fill="#000" >16</text>
<text x="57.8" y="312.96" font-family="Liberation Sans, Arial, Helvetica, sans-serif" font-size="9.25" text-anchor="end" fill="#000" >18</text>
<text x="57.8" y="301.58" font-family="Liberation Sans, Arial, Helvetica, sans-serif" font-size="9.25" text-anchor="end" fill="#000" >20</text>
<text x="57.8" y="290.19" font-family="Liberation Sans, Arial, Helvetica, sans-serif" font-size="9.25" text-anchor="end" fill="#000" >22</text>
<text x="57.8" y="278.81" font-family="Liberation Sans, Arial, Helvetica, sans-serif" font-size="9.25" text-anchor="end" fill="#000" >24</text>
<text x="57.8" y="267.42" font-family="Liberation Sans, Arial, Helvetica, sans-serif" font-size="9.25" text-anchor="end" fill="#000" >26</text>
<text x="57.8" y="256.04" font-family="Liberation Sans, Arial, Helvetica, sans-serif" font-size="9.25" text-anchor="end" fill="#000" >28</text>
<text x="57.8" y="244.65" font-family="Liberation Sans, Arial, Helvetica, sans-serif" font-size="9.25" text-anchor="end" fill="#000" >30</text>
<text x="57.8" y="233.27" font-family="Liberation Sans, Arial, Helvetica, sans-serif" font-size="9.25" text-anchor="end" fill="#000" >32</text>
<text x="57.8" y="221.88" font-family="Liberation Sans, Arial, Helvetica, sans-serif" font-size="9.25" text-anchor="end" fill="#000" >34</text>
<text x="57.8" y="210.5" font-family="Liberation Sans, Arial, Helvetica, sans-serif" font-size="9.25" text-anchor="end" fill="#000" >36</text>
<text x="57.8" y="199.11" font-family="Liberation Sans, Arial, Helvetica, sans-serif" font-size="9.25" text-anchor="end" fill="#000" >38</text>
<text x="57.8" y="465.23" font-family="Liberation Sans, Arial, Helvetica, sans-serif" font-size="9.25" text-anchor="end" fill="#000" >150</text>
<text x="57.8" y="446.73" font-family="Liberation Sans, Arial, Helvetica, sans-serif" font-size="9.25" text-anchor="end" fill="#000" >200</text>
<text x="57.8" y="428.23" font-family="Liberation Sans, Arial, Helvetica, sans-serif" font-size="9.25" text-anchor="end" fill="#000" >250</text>
<text x="57.8" y="409.73" font-family="Liberation Sans, Arial, Helvetica, sans-serif" font-size="9.25" text-anchor="end" fill="#000" >300</text>
<text x="57.8" y="391.23" font-family="Liberation Sans, Arial, Helvetica, sans-serif" font-size="9.25" text-anchor="end" fill="#000" >350</text>
<text x="57.8" y="372.73" font-family="Liberation Sans, Arial, Helvetica, sans-serif" font-size="9.25" text-anchor="end" fill="#000" >400</text>
<text x="59.9" y="491.2" font-family="Liberation Sans, Arial, Helvetica, sans-serif" font-size="9.25" text-anchor="middle" fill="#000" >0:00</text>
<text x="99.67" y="491.2" font-family="Liberation Sans, Arial, Helvetica, sans-serif" font-size="9.25" text-anchor="middle" fill="#000" >0:05</text>
<text x="139.43" y="491.2" font-family="Liberation Sans, Arial, Helvetica, sans-serif" font-size="9.25" text-anchor="middle" fill="#000" >0:10</text>
<text x="179.2" y="491.2" font-family="Liberation Sans, Arial, Helvetica, sans-serif" font-size="9.25" text-anchor="middle" fill="#000" >0:15</text>
<text x="218.96" y="491.2" font-family="Liberation Sans, Arial, Helvetica, sans-serif" font-size="9.25" text-anchor="middle" fill="#000" >0:20</text>
<text x="258.72" y="491.2" font-family="Liberation Sans, Arial, Helvetica, sans-serif" font-size="9.25" text-anchor="middle" fill="#000" >0:25</text>
<text x="298.49" y="491.2" font-family="Liberation Sans, Arial, Helvetica, sans-serif" font-size="9.25" text-anchor="middle" fill="#000" >0:30</text>
<text x="338.25" y="491.2" font-family="Liberation Sans, Arial, Helvetica, sans-serif" font-size="9.25" text-anchor="middle" fill="#000" >0:35</text>
<text x="378.02" y="491.2" font-family="Liberation Sans, Arial, Helvetica, sans-serif" font-size="9.25" text-anchor="middle" fill="#000" >0:40</text>
<text x="417.78" y="491.2" font-family="Liberation Sans, Arial, Helvetica, sans-serif" font-size="9.25" text-anchor="middle" fill="#000" >0:45</text>
<text x="457.55" y="491.2" font-family="Liberation Sans, Arial, Helvetica, sans-serif" font-size="9.25" text-anchor="middle" fill="#000" >0:50</text>
<text x="497.31" y="491.2" font-family="Liberation Sans, Arial, Helvetica, sans-serif" font-size="9.25" text-anchor="middle" fill="#000" >0:55</text>
<text x="537.08" y="491.2" font-family="Liberation Sans, Arial, Helvetica, sans-serif" font-size="9.25" text-anchor="middle" fill="#000" >1:00</text>
<text transform="translate(36.6,110.6) rotate(-90)" font-family="Liberation Sans, Arial, Helvetica, sans-serif" font-size="9.25" text-anchor="middle" fill="#000">BPM</text>
<text transform="translate(41,259) rotate(-90)" font-family="Liberation Sans, Arial, Helvetica, sans-serif" font-size="9.25" text-anchor="middle" fill="#000">SPM</text>
<text transform="translate(35.8,407.1) rotate(-90)" font-family="Liberation Sans, Arial, Helvetica, sans-serif" font-size="9.25" text-anchor="middle" fill="#000">Watts</text>
<text transform="translate(607,111.5) rotate(-90)" font-family="Liberation Sans, Arial, Helvetica, sans-serif" font-size="9.6" text-anchor="middle" fill="#000">(sec/500)</text>
<text x="318" y="503.5" font-family="Liberation Sans, Arial, Helvetica, sans-serif" font-size="9.25" text-anchor="middle" fill="#000" >Time (h:m)</text>
<text x="318" y="33.8" font-family="Liberation Sans, Arial, Helvetica, sans-serif" font-size="11.1" text-anchor="middle" fill="#000" xml:space="preserve">Input File:  sled_2016-07-02T15-33-39ZEDT.strokes.csv --- HR / Pace / Rate / Power</text>
<text x="68" y="48.8" font-family="Liberation Sans, Arial, Helvetica, sans-serif" font-size="9.25" text-anchor="start" fill="#000" >Drag Factor: 136</text>
</svg></body></html>
